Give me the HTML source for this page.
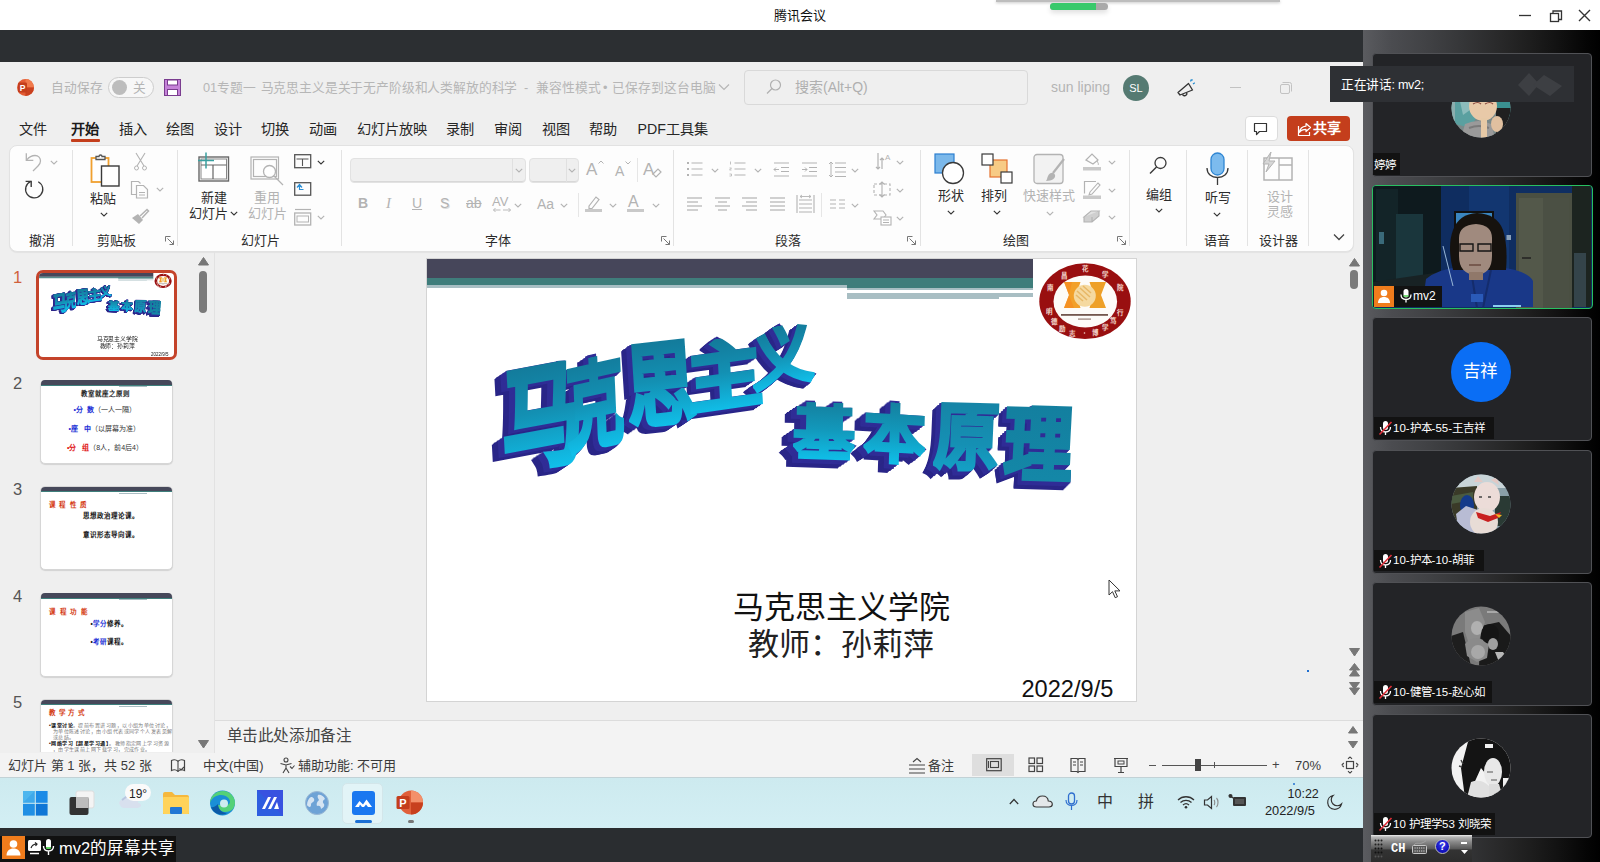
<!DOCTYPE html>
<html lang="zh-CN"><head><meta charset="utf-8">
<style>
*{box-sizing:border-box;margin:0;padding:0}
html,body{width:1600px;height:862px;overflow:hidden}
body{position:relative;font-family:"Liberation Sans",sans-serif;background:#fff;color:#222}
.a{position:absolute}
.t{position:absolute;white-space:nowrap;line-height:1}
svg{position:absolute;overflow:visible}
.wa{position:absolute;left:0;top:0;font-size:100px;line-height:1;font-weight:900;white-space:nowrap;transform-origin:0 0;-webkit-text-stroke:5px currentColor}
.wf{color:transparent;-webkit-background-clip:text;background-clip:text}
</style></head><body>

<!-- ============ TENCENT TITLE BAR ============ -->
<div class="a" style="left:0;top:0;width:1600px;height:30px;background:#fff"></div>
<div class="a" style="left:996px;top:0;width:284px;height:2px;background:#bdbdbd;box-shadow:0 1px 3px rgba(0,0,0,.25)"></div>
<div class="a" style="left:1050px;top:3px;width:58px;height:7px;border-radius:4px;background:#a9a9a9;box-shadow:0 3px 5px rgba(0,0,0,.12)"></div>
<div class="a" style="left:1050px;top:3px;width:46px;height:7px;border-radius:4px 0 0 4px;background:#38c96b"></div>
<div class="t" style="left:774px;top:8.5px;font-size:13px;color:#111">腾讯会议</div>
<svg style="left:1518px;top:8px" width="80" height="16">
<line x1="1" y1="7.5" x2="13" y2="7.5" stroke="#333" stroke-width="1.3"/>
<rect x="32.5" y="5.5" width="8" height="8" fill="none" stroke="#333" stroke-width="1.3"/>
<path d="M35 5.5V3h8.5v8.5H41" fill="none" stroke="#333" stroke-width="1.3"/>
<path d="M61 2l11 11M72 2L61 13" stroke="#333" stroke-width="1.4"/>
</svg>

<!-- ============ DARK BAR ============ -->
<div class="a" style="left:0;top:30px;width:1363px;height:32px;background:#2c2f32"></div>

<!-- ============ POWERPOINT WINDOW ============ -->
<div class="a" style="left:0;top:62px;width:1363px;height:718px;background:#efefef"></div>
<!-- ppt title row -->
<svg style="left:16px;top:78px" width="20" height="20">
<circle cx="9.5" cy="9.5" r="8.5" fill="#e25b33"/>
<path d="M9.5 1A8.5 8.5 0 0 1 18 9.5H9.5z" fill="#f07a4c"/>
<path d="M9.5 18A8.5 8.5 0 0 0 18 9.5H9.5z" fill="#c9411f"/>
<rect x="2" y="4.5" width="9" height="10" rx="1.2" fill="#c43e1c"/>
<text x="6.5" y="12.8" font-family="Liberation Sans" font-weight="bold" font-size="8.5" fill="#fff" text-anchor="middle">P</text>
</svg>
<div class="t" style="left:51px;top:81.5px;font-size:12.7px;color:#b4b4b4">自动保存</div>
<div class="a" style="left:108px;top:77px;width:46px;height:21px;border:1px solid #cdcdcd;border-radius:11px;background:#f7f7f7"></div>
<div class="a" style="left:112px;top:80px;width:15px;height:15px;border-radius:50%;background:#bdbdbd"></div>
<div class="t" style="left:133px;top:81.5px;font-size:12.7px;color:#b4b4b4">关</div>
<svg style="left:164px;top:79px" width="18" height="18">
<rect x="0.5" y="0.5" width="16" height="16" fill="#c583d8" stroke="#7a3d8f" stroke-width="1"/>
<rect x="3.5" y="1" width="10" height="5" fill="#fff" stroke="#7a3d8f" stroke-width="1"/>
<rect x="3.5" y="10.5" width="10" height="6" fill="#fff" stroke="#7a3d8f" stroke-width="1"/>
</svg>
<div class="t" style="left:203px;top:81.5px;font-size:12.75px;color:#b6b6b6">01专题一</div>
<div class="t" style="left:260.5px;top:81.5px;font-size:12.75px;letter-spacing:-0.16px;color:#b6b6b6">马克思主义是关于无产阶级和人类解放的科学</div>
<div class="t" style="left:524px;top:81.5px;font-size:12.75px;color:#b6b6b6">-</div>
<div class="t" style="left:536px;top:81.5px;font-size:12.75px;color:#b6b6b6">兼容性模式</div>
<div class="t" style="left:603px;top:81.5px;font-size:12.75px;color:#b6b6b6">•</div>
<div class="t" style="left:612px;top:81.5px;font-size:12.75px;color:#b6b6b6">已保存到这台电脑</div>
<svg style="left:718px;top:83px" width="12" height="8"><path d="M1 1.5l5 5 5-5" fill="none" stroke="#b6b6b6" stroke-width="1.2"/></svg>
<div class="a" style="left:744px;top:70px;width:284px;height:35px;border:1px solid #d9d9d9;border-radius:4px;background:#efefef"></div>
<svg style="left:766px;top:79px" width="16" height="16"><circle cx="9.5" cy="6" r="5" fill="none" stroke="#b0b0b0" stroke-width="1.2"/><path d="M6 9.5L1 14.5" stroke="#b0b0b0" stroke-width="1.3"/></svg>
<div class="t" style="left:795px;top:79.5px;font-size:14px;color:#b0b0b0">搜索(Alt+Q)</div>
<div class="t" style="left:1051px;top:79.5px;font-size:14px;color:#b4b4b4">sun liping</div>
<div class="a" style="left:1123px;top:75px;width:26px;height:26px;border-radius:50%;background:#557a72"></div>
<div class="t" style="left:1128px;top:82.5px;font-size:11px;color:#fff;width:16px;text-align:center">SL</div>
<svg style="left:1176px;top:78px" width="22" height="20"><path d="M2 14.5L12.5 5.5l4 6.5L4 17z" fill="none" stroke="#333" stroke-width="1.3" stroke-linejoin="round"/><path d="M6.5 16.2a2.2 2.2 0 0 0 4.2-1.4" fill="none" stroke="#333" stroke-width="1.3"/><path d="M14.5 3.5l.8-2M17 6l1.8-1.2M16.3 1.3l-.6 1.4" stroke="#1f8ad0" stroke-width="1.2"/></svg>
<div class="a" style="left:1230px;top:86.5px;width:11px;height:1.2px;background:#c2c2c2"></div>
<svg style="left:1280px;top:82px" width="14" height="14"><rect x="0.5" y="2.5" width="9" height="9" rx="1.5" fill="none" stroke="#c2c2c2"/><path d="M2.5 0.5h7a2 2 0 0 1 2 2v7" fill="none" stroke="#c2c2c2"/></svg>

<!-- menu row -->
<div class="t" style="left:18.5px;top:122px;font-size:14.2px;color:#262626">文件</div>
<div class="t" style="left:71px;top:122px;font-size:14.2px;color:#1a1a1a;font-weight:bold">开始</div>
<div class="a" style="left:71px;top:139px;width:29px;height:2.5px;border-radius:1px;background:#c43e1c"></div>
<div class="t" style="left:118.5px;top:122px;font-size:14.2px;color:#262626">插入</div>
<div class="t" style="left:166px;top:122px;font-size:14.2px;color:#262626">绘图</div>
<div class="t" style="left:214px;top:122px;font-size:14.2px;color:#262626">设计</div>
<div class="t" style="left:261px;top:122px;font-size:14.2px;color:#262626">切换</div>
<div class="t" style="left:308.5px;top:122px;font-size:14.2px;color:#262626">动画</div>
<div class="t" style="left:356.5px;top:122px;font-size:14.2px;color:#262626">幻灯片放映</div>
<div class="t" style="left:446px;top:122px;font-size:14.2px;color:#262626">录制</div>
<div class="t" style="left:494px;top:122px;font-size:14.2px;color:#262626">审阅</div>
<div class="t" style="left:541.5px;top:122px;font-size:14.2px;color:#262626">视图</div>
<div class="t" style="left:589px;top:122px;font-size:14.2px;color:#262626">帮助</div>
<div class="t" style="left:637.5px;top:122px;font-size:14.2px;color:#262626">PDF工具集</div>
<div class="a" style="left:1245px;top:116px;width:32.5px;height:25px;border:1px solid #dcdcdc;border-radius:4px;background:#fff"></div>
<svg style="left:1253px;top:122px" width="16" height="14"><path d="M1.5 1.5h12v8h-7l-3 3v-3h-2z" fill="none" stroke="#333" stroke-width="1.2" stroke-linejoin="round"/></svg>
<div class="a" style="left:1287px;top:116px;width:63px;height:25px;border-radius:4px;background:#c43e1c"></div>
<svg style="left:1297px;top:121px" width="16" height="16"><path d="M9 2.5l4.5 4-4.5 4V8.3c-3 0-5 .8-6.5 3 .4-3.5 2.5-5.8 6.5-6.2z" fill="none" stroke="#fff" stroke-width="1.2" stroke-linejoin="round"/><path d="M1.5 5v9.5h11V11" fill="none" stroke="#fff" stroke-width="1.2"/></svg>
<div class="t" style="left:1313px;top:121px;font-size:14px;color:#fff;font-weight:bold">共享</div>

<!-- ribbon -->
<div class="a" style="left:9px;top:145px;width:1345px;height:107px;background:#fdfdfd;border:1px solid #e2e2e2;border-radius:8px;box-shadow:0 1px 1px rgba(0,0,0,.05)"></div>
<div class="a" style="left:72px;top:150px;width:1px;height:96px;background:#e3e3e3"></div>
<div class="a" style="left:177px;top:150px;width:1px;height:96px;background:#e3e3e3"></div>
<div class="a" style="left:341px;top:150px;width:1px;height:96px;background:#e3e3e3"></div>
<div class="a" style="left:673px;top:150px;width:1px;height:96px;background:#e3e3e3"></div>
<div class="a" style="left:920px;top:150px;width:1px;height:96px;background:#e3e3e3"></div>
<div class="a" style="left:1129px;top:150px;width:1px;height:96px;background:#e3e3e3"></div>
<div class="a" style="left:1186px;top:150px;width:1px;height:96px;background:#e3e3e3"></div>
<div class="a" style="left:1247px;top:150px;width:1px;height:96px;background:#e3e3e3"></div>
<div class="a" style="left:1308px;top:150px;width:1px;height:96px;background:#e3e3e3"></div>
<svg style="left:25px;top:152px" width="20" height="22"><path d="M1.3 1.3v7h7" fill="none" stroke="#b3b3b3" stroke-width="1.3"/><path d="M1.8 7.8C4.5 4.5 7.5 3.5 10 3.5c3.5 0 5.5 2.5 5.5 5.5 0 2-1 3.5-2.5 5L8 19" fill="none" stroke="#b3b3b3" stroke-width="1.3"/></svg>
<svg style="left:50px;top:159.5px" width="8" height="5"><path d="M.8 .8L4 4 7.2 .8" fill="none" stroke="#b3b3b3" stroke-width="1.1"/></svg>
<svg style="left:24px;top:180px" width="22" height="22"><path d="M14.24 1.71A8.6 8.6 0 1 1 6.84 1.38" fill="none" stroke="#3a3a3a" stroke-width="1.3"/><path d="M1.6 1.4h5.6V7" fill="none" stroke="#3a3a3a" stroke-width="1.4"/></svg>
<div class="t" style="left:29px;top:233.5px;font-size:13px;color:#2b2b2b">撤消</div>
<svg style="left:90px;top:153px" width="32" height="34">
<rect x="1.5" y="5" width="17" height="24" fill="#fff" stroke="#f0a030" stroke-width="1.8"/>
<path d="M6 6.5V3.5h3a1.5 1.5 0 0 1 3 0h3v3z" fill="#fff" stroke="#555" stroke-width="1.3"/>
<rect x="11.5" y="13" width="17.5" height="20" fill="#fff" stroke="#3a3a3a" stroke-width="1.4"/>
</svg>
<div class="t" style="left:90px;top:191.5px;font-size:13px;color:#2b2b2b">粘贴</div>
<svg style="left:99.5px;top:211.5px" width="8" height="5"><path d="M.8 .8L4 4 7.2 .8" fill="none" stroke="#333" stroke-width="1.1"/></svg>
<svg style="left:133px;top:152px" width="15" height="19"><path d="M3 1l8 13M12 1L4 14" stroke="#b3b3b3" stroke-width="1.1"/><circle cx="3.5" cy="16" r="2" fill="none" stroke="#b3b3b3"/><circle cx="11.5" cy="16" r="2" fill="none" stroke="#b3b3b3"/></svg>
<svg style="left:130px;top:180px" width="20" height="19"><path d="M6 14.5H1.5v-13h7l2 2" fill="none" stroke="#b3b3b3" stroke-width="1.2"/><path d="M6.5 5.5h7l4 4v8.5h-11z" fill="none" stroke="#b3b3b3" stroke-width="1.2"/><path d="M9 12.5h6M9 15h6" stroke="#b3b3b3"/></svg>
<svg style="left:156px;top:186.5px" width="8" height="5"><path d="M.8 .8L4 4 7.2 .8" fill="none" stroke="#b3b3b3" stroke-width="1.1"/></svg>
<svg style="left:131px;top:208px" width="19" height="17"><path d="M1 10l6-4 5 6-4 4z" fill="#b3b3b3"/><path d="M9 8l7-6.5 1.5 1.5-6.5 7" fill="none" stroke="#b3b3b3" stroke-width="1.5"/></svg>
<div class="t" style="left:97px;top:233.5px;font-size:13px;color:#2b2b2b">剪贴板</div>
<svg style="left:165px;top:236px" width="10" height="10"><path d="M.5 .5h5M.5 .5v5" stroke="#777" stroke-width="1"/><path d="M2.5 2.5l6 6M4.5 8.5h4v-4" fill="none" stroke="#777" stroke-width="1"/></svg>
<svg style="left:197px;top:152px" width="34" height="30">
<rect x="2" y="5" width="29.5" height="24" fill="#fff" stroke="#666" stroke-width="1.4"/>
<rect x="4" y="7" width="25.5" height="20" fill="none" stroke="#888" stroke-width="1"/>
<path d="M4 13h25.5M16 13v14" stroke="#666" stroke-width="1.2"/>
<path d="M9 .5v16M1 8.5h16" stroke="#3aa0a0" stroke-width="1.5"/>
</svg>
<div class="t" style="left:201px;top:190.5px;font-size:13px;color:#2b2b2b">新建</div>
<div class="t" style="left:189px;top:206.5px;font-size:13px;color:#2b2b2b">幻灯片</div>
<svg style="left:230px;top:210.5px" width="8" height="5"><path d="M.8 .8L4 4 7.2 .8" fill="none" stroke="#333" stroke-width="1.1"/></svg>
<svg style="left:250px;top:156px" width="36" height="32">
<rect x="1" y="1" width="27.5" height="22" fill="none" stroke="#b3b3b3" stroke-width="1.2"/>
<rect x="3.5" y="3.5" width="23" height="17" fill="none" stroke="#b3b3b3" stroke-width="1.2"/>
<circle cx="19.5" cy="15.5" r="6" fill="#fff" stroke="#b3b3b3" stroke-width="1.3"/>
<path d="M24 20l9 9" stroke="#b3b3b3" stroke-width="1.3"/>
</svg>
<div class="t" style="left:253.5px;top:190.5px;font-size:13px;color:#b3b3b3">重用</div>
<div class="t" style="left:247.5px;top:206.5px;font-size:13px;color:#b3b3b3">幻灯片</div>
<svg style="left:294px;top:154px" width="18" height="15"><rect x=".7" y=".7" width="16" height="13" fill="none" stroke="#555" stroke-width="1.3"/><path d="M2.5 5h12M8.5 5v7" stroke="#555" stroke-width="1.1"/></svg>
<svg style="left:317px;top:159.5px" width="8" height="5"><path d="M.8 .8L4 4 7.2 .8" fill="none" stroke="#333" stroke-width="1.1"/></svg>
<svg style="left:294px;top:180px" width="18" height="16"><rect x=".7" y="2.7" width="16" height="12.5" fill="none" stroke="#555" stroke-width="1.3"/><path d="M3 7.5l2.5-3 2.5 3M5.5 5v4.5h4" fill="none" stroke="#2b8fd6" stroke-width="1.2"/></svg>
<svg style="left:294px;top:208px" width="18" height="18"><path d="M1 1.5h16" stroke="#b3b3b3" stroke-width="1.2"/><rect x=".7" y="5" width="16" height="12" fill="none" stroke="#b3b3b3" stroke-width="1.3"/><rect x="3" y="8" width="11.5" height="6" fill="none" stroke="#b3b3b3"/></svg>
<svg style="left:317px;top:214.5px" width="8" height="5"><path d="M.8 .8L4 4 7.2 .8" fill="none" stroke="#b3b3b3" stroke-width="1.1"/></svg>
<div class="t" style="left:240.5px;top:233.5px;font-size:13px;color:#2b2b2b">幻灯片</div>
<div class="a" style="left:350px;top:158px;width:176px;height:25px;background:#efefef;border:1px solid #e2e2e2;border-radius:4px;box-shadow:inset 0 -1px 0 #d8d8d8"></div>
<div class="a" style="left:512px;top:159px;width:1px;height:23px;background:#e0e0e0"></div>
<svg style="left:515px;top:167.5px" width="8" height="5"><path d="M.8 .8L4 4 7.2 .8" fill="none" stroke="#b3b3b3" stroke-width="1.1"/></svg>
<div class="a" style="left:528.5px;top:158px;width:50px;height:25px;background:#efefef;border:1px solid #e2e2e2;border-radius:4px;box-shadow:inset 0 -1px 0 #d8d8d8"></div>
<div class="a" style="left:566px;top:159px;width:1px;height:23px;background:#e0e0e0"></div>
<svg style="left:568px;top:167.5px" width="8" height="5"><path d="M.8 .8L4 4 7.2 .8" fill="none" stroke="#b3b3b3" stroke-width="1.1"/></svg>
<div class="t" style="left:586px;top:161px;font-size:17px;color:#b3b3b3">A</div><svg style="left:598px;top:160px" width="6" height="4"><path d="M.5 3.5L3 1l2.5 2.5" fill="none" stroke="#b3b3b3"/></svg>
<div class="t" style="left:615px;top:164px;font-size:14px;color:#b3b3b3">A</div><svg style="left:625px;top:161px" width="6" height="4"><path d="M.5 .5L3 3l2.5-2.5" fill="none" stroke="#b3b3b3"/></svg>
<div class="a" style="left:637px;top:158px;width:1px;height:24px;background:#e6e6e6"></div>
<div class="t" style="left:643px;top:161px;font-size:17px;color:#b3b3b3">A</div><svg style="left:652px;top:168px" width="10" height="10"><path d="M1 6l5-5 3 3-5 5z" fill="#fff" stroke="#b3b3b3" stroke-width="1.2"/></svg>
<div class="t" style="left:358px;top:196px;font-size:14px;color:#b3b3b3;font-weight:bold">B</div>
<div class="t" style="left:386px;top:196px;font-size:15px;color:#b3b3b3;font-family:'Liberation Serif';font-style:italic">I</div>
<div class="t" style="left:412px;top:196px;font-size:14px;color:#b3b3b3;text-decoration:underline">U</div>
<div class="t" style="left:440px;top:196px;font-size:14px;color:#b3b3b3;text-shadow:1px 1px 0 #ddd">S</div>
<div class="t" style="left:466px;top:196px;font-size:14px;color:#b3b3b3;text-decoration:line-through">ab</div>
<div class="t" style="left:492px;top:194.5px;font-size:13px;color:#b3b3b3">AV</div><svg style="left:493px;top:207px" width="18" height="6"><path d="M.5 3h7M.5 3l2-2M.5 3l2 2M10 3h7.5M17.5 3l-2-2M17.5 3l-2 2" fill="none" stroke="#b3b3b3" stroke-width=".9"/></svg>
<svg style="left:514px;top:202.5px" width="8" height="5"><path d="M.8 .8L4 4 7.2 .8" fill="none" stroke="#b3b3b3" stroke-width="1.1"/></svg>
<div class="t" style="left:537px;top:197px;font-size:14px;color:#b3b3b3">Aa</div>
<svg style="left:560px;top:202.5px" width="8" height="5"><path d="M.8 .8L4 4 7.2 .8" fill="none" stroke="#b3b3b3" stroke-width="1.1"/></svg>
<div class="a" style="left:578px;top:193px;width:1px;height:24px;background:#e6e6e6"></div>
<svg style="left:585px;top:195px" width="18" height="18"><path d="M4 11l7-9 3 2.5-7 9H4z" fill="none" stroke="#b3b3b3" stroke-width="1.2"/><rect x="0" y="14" width="17" height="3" fill="#c9c9c9"/></svg>
<svg style="left:609px;top:202.5px" width="8" height="5"><path d="M.8 .8L4 4 7.2 .8" fill="none" stroke="#b3b3b3" stroke-width="1.1"/></svg>
<div class="t" style="left:628px;top:194px;font-size:16px;color:#b3b3b3">A</div><div class="a" style="left:627px;top:209px;width:17px;height:3px;background:#c9c9c9"></div>
<svg style="left:652px;top:202.5px" width="8" height="5"><path d="M.8 .8L4 4 7.2 .8" fill="none" stroke="#b3b3b3" stroke-width="1.1"/></svg>
<div class="t" style="left:485px;top:233.5px;font-size:13px;color:#2b2b2b">字体</div>
<svg style="left:661px;top:236px" width="10" height="10"><path d="M.5 .5h5M.5 .5v5" stroke="#777" stroke-width="1"/><path d="M2.5 2.5l6 6M4.5 8.5h4v-4" fill="none" stroke="#777" stroke-width="1"/></svg>
<svg style="left:686px;top:161px" width="18" height="16"><path d="M1 2h2M1 8h2M1 14h2" stroke="#b3b3b3" stroke-width="2"/><path d="M5.5 2h11M5.5 8h11M5.5 14h11" stroke="#b3b3b3" stroke-width="1.2"/></svg>
<svg style="left:711px;top:167.5px" width="8" height="5"><path d="M.8 .8L4 4 7.2 .8" fill="none" stroke="#b3b3b3" stroke-width="1.1"/></svg>
<svg style="left:729px;top:161px" width="18" height="16"><path d="M1.5 .5v3M.5 7h2l-2 2h2M.5 13h2v2h-2" fill="none" stroke="#b3b3b3" stroke-width=".8"/><path d="M5.5 2h11M5.5 8h11M5.5 14h11" stroke="#b3b3b3" stroke-width="1.2"/></svg>
<svg style="left:754px;top:167.5px" width="8" height="5"><path d="M.8 .8L4 4 7.2 .8" fill="none" stroke="#b3b3b3" stroke-width="1.1"/></svg>
<svg style="left:773px;top:162px" width="17" height="15"><path d="M1 1h15M8 5.5h8M8 9.5h8M1 14h15" stroke="#b3b3b3" stroke-width="1.2"/><path d="M6 7.5H1M3 5.5l-2 2 2 2" fill="none" stroke="#b3b3b3"/></svg>
<svg style="left:801px;top:162px" width="17" height="15"><path d="M1 1h15M8 5.5h8M8 9.5h8M1 14h15" stroke="#b3b3b3" stroke-width="1.2"/><path d="M1 7.5h5M4 5.5l2 2-2 2" fill="none" stroke="#b3b3b3"/></svg>
<svg style="left:828px;top:161px" width="19" height="17"><path d="M7 2h11M7 6.5h11M7 11h11M7 15.5h11" stroke="#b3b3b3" stroke-width="1.2"/><path d="M3 1v15M1 3l2-2 2 2M1 14l2 2 2-2" fill="none" stroke="#b3b3b3"/></svg>
<svg style="left:851px;top:167.5px" width="8" height="5"><path d="M.8 .8L4 4 7.2 .8" fill="none" stroke="#b3b3b3" stroke-width="1.1"/></svg>
<svg style="left:687px;top:197px" width="17" height="15"><path d="M0 1h15" stroke="#b3b3b3" stroke-width="1.2"/><path d="M0 5h11" stroke="#b3b3b3" stroke-width="1.2"/><path d="M0 9h15" stroke="#b3b3b3" stroke-width="1.2"/><path d="M0 13h11" stroke="#b3b3b3" stroke-width="1.2"/></svg>
<svg style="left:715px;top:197px" width="17" height="15"><path d="M0 1h15" stroke="#b3b3b3" stroke-width="1.2"/><path d="M3 5h9" stroke="#b3b3b3" stroke-width="1.2"/><path d="M0 9h15" stroke="#b3b3b3" stroke-width="1.2"/><path d="M3 13h9" stroke="#b3b3b3" stroke-width="1.2"/></svg>
<svg style="left:742px;top:197px" width="17" height="15"><path d="M0 1h15" stroke="#b3b3b3" stroke-width="1.2"/><path d="M4 5h11" stroke="#b3b3b3" stroke-width="1.2"/><path d="M0 9h15" stroke="#b3b3b3" stroke-width="1.2"/><path d="M4 13h11" stroke="#b3b3b3" stroke-width="1.2"/></svg>
<svg style="left:770px;top:197px" width="17" height="15"><path d="M0 1h15" stroke="#b3b3b3" stroke-width="1.2"/><path d="M0 5h15" stroke="#b3b3b3" stroke-width="1.2"/><path d="M0 9h15" stroke="#b3b3b3" stroke-width="1.2"/><path d="M0 13h15" stroke="#b3b3b3" stroke-width="1.2"/></svg>
<svg style="left:796px;top:194px" width="19" height="20"><path d="M1 1v18M18 1v18M3 6h13M3 10h13M3 14h13M3 18h13" stroke="#b3b3b3" stroke-width="1.1"/><path d="M4 2.5h11M4 2.5l2-1.5M4 2.5l2 1.5M15 2.5l-2-1.5M15 2.5l-2 1.5" fill="none" stroke="#b3b3b3" stroke-width=".9"/></svg>
<div class="a" style="left:821px;top:193px;width:1px;height:24px;background:#e6e6e6"></div>
<svg style="left:830px;top:199px" width="16" height="11"><path d="M0 1h6M0 5h6M0 9h6M9 1h6M9 5h6M9 9h6" stroke="#b3b3b3" stroke-width="1.2"/></svg>
<svg style="left:851px;top:202.5px" width="8" height="5"><path d="M.8 .8L4 4 7.2 .8" fill="none" stroke="#b3b3b3" stroke-width="1.1"/></svg>
<svg style="left:875px;top:152px" width="17" height="20"><path d="M3 1v16M1 15l2 2 2-2" fill="none" stroke="#b3b3b3" stroke-width="1.2"/><path d="M7 17V6M5 8l2-2 2 2" fill="none" stroke="#b3b3b3" stroke-width="1.2"/><text x="10" y="8" font-size="8" fill="#b3b3b3" font-family="Liberation Sans">A</text></svg>
<svg style="left:896px;top:159.5px" width="8" height="5"><path d="M.8 .8L4 4 7.2 .8" fill="none" stroke="#b3b3b3" stroke-width="1.1"/></svg>
<svg style="left:873px;top:181px" width="18" height="17"><rect x="1" y="3" width="16" height="11" fill="none" stroke="#b3b3b3" stroke-width="1.1" stroke-dasharray="3 2"/><path d="M9 .5v16M6.5 3.5L9 1l2.5 2.5M6.5 13.5L9 16l2.5-2.5" fill="none" stroke="#b3b3b3" stroke-width="1.1"/></svg>
<svg style="left:896px;top:187.5px" width="8" height="5"><path d="M.8 .8L4 4 7.2 .8" fill="none" stroke="#b3b3b3" stroke-width="1.1"/></svg>
<svg style="left:873px;top:209px" width="20" height="17"><path d="M1 2h9l3 4-3 4H1l3-4z" fill="none" stroke="#b3b3b3" stroke-width="1.1"/><rect x="8" y="8" width="10" height="8" fill="#fff" stroke="#b3b3b3" stroke-width="1.1"/><path d="M10 11h6M10 13.5h6" stroke="#b3b3b3"/></svg>
<svg style="left:896px;top:215.5px" width="8" height="5"><path d="M.8 .8L4 4 7.2 .8" fill="none" stroke="#b3b3b3" stroke-width="1.1"/></svg>
<div class="t" style="left:774.5px;top:233.5px;font-size:13px;color:#2b2b2b">段落</div>
<svg style="left:907px;top:236px" width="10" height="10"><path d="M.5 .5h5M.5 .5v5" stroke="#777" stroke-width="1"/><path d="M2.5 2.5l6 6M4.5 8.5h4v-4" fill="none" stroke="#777" stroke-width="1"/></svg>
<svg style="left:934px;top:153px" width="34" height="32"><rect x="1" y="1" width="19" height="19" fill="#7bb8ea" stroke="#2c7fd0" stroke-width="1.2"/><circle cx="19" cy="20" r="10.5" fill="#fff" stroke="#3a3a3a" stroke-width="1.3"/></svg>
<div class="t" style="left:937.5px;top:188.5px;font-size:13px;color:#2b2b2b">形状</div>
<svg style="left:947px;top:209.5px" width="8" height="5"><path d="M.8 .8L4 4 7.2 .8" fill="none" stroke="#333" stroke-width="1.1"/></svg>
<svg style="left:981px;top:153px" width="33" height="32"><rect x="9" y="7" width="17" height="17" fill="#f7cb85" stroke="#e4722f" stroke-width="1.2"/><rect x="1" y="1" width="11" height="11" fill="#fff" stroke="#3a3a3a" stroke-width="1.2"/><rect x="20" y="19" width="11" height="11" fill="#fff" stroke="#3a3a3a" stroke-width="1.2"/></svg>
<div class="t" style="left:981px;top:188.5px;font-size:13px;color:#2b2b2b">排列</div>
<svg style="left:993px;top:209.5px" width="8" height="5"><path d="M.8 .8L4 4 7.2 .8" fill="none" stroke="#333" stroke-width="1.1"/></svg>
<svg style="left:1033px;top:153px" width="34" height="33"><rect x="1" y="1.5" width="29" height="29" rx="3" fill="#f2f2f2" stroke="#b3b3b3" stroke-width="1.3"/><path d="M31 6L20 20" stroke="#b3b3b3" stroke-width="2.2"/><path d="M15 23c2-4 6-4 7-1 1 3-3 6-9 6 1-1 1-3 2-5z" fill="#b3b3b3"/></svg>
<div class="t" style="left:1023px;top:188.5px;font-size:13px;color:#b3b3b3">快速样式</div>
<svg style="left:1046px;top:210.5px" width="8" height="5"><path d="M.8 .8L4 4 7.2 .8" fill="none" stroke="#b3b3b3" stroke-width="1.1"/></svg>
<svg style="left:1083px;top:152px" width="19" height="19"><path d="M3 8l6-6 6 6-5 4z" fill="none" stroke="#b3b3b3" stroke-width="1.2"/><path d="M14 9c1 2 2 3 1 4" fill="none" stroke="#b3b3b3"/><rect x="0" y="15" width="18" height="3.5" fill="#c9c9c9"/></svg>
<svg style="left:1108px;top:159.5px" width="8" height="5"><path d="M.8 .8L4 4 7.2 .8" fill="none" stroke="#b3b3b3" stroke-width="1.1"/></svg>
<svg style="left:1083px;top:180px" width="19" height="19"><path d="M13 1.5H1.5v12" fill="none" stroke="#b3b3b3" stroke-width="1.2"/><path d="M7 12l8-9 2 2-8 9-3 1z" fill="none" stroke="#b3b3b3" stroke-width="1.1"/><rect x="0" y="15.5" width="18" height="3.5" fill="#c9c9c9"/></svg>
<svg style="left:1108px;top:187.5px" width="8" height="5"><path d="M.8 .8L4 4 7.2 .8" fill="none" stroke="#b3b3b3" stroke-width="1.1"/></svg>
<svg style="left:1083px;top:208px" width="18" height="16"><path d="M1 9l7-6h8l-7 6z" fill="#e2e2e2" stroke="#b3b3b3" stroke-width="1.1"/><path d="M1 9v5h8l7-6V3M9 9v5" fill="#cfcfcf" stroke="#b3b3b3" stroke-width="1.1"/></svg>
<svg style="left:1108px;top:214.5px" width="8" height="5"><path d="M.8 .8L4 4 7.2 .8" fill="none" stroke="#b3b3b3" stroke-width="1.1"/></svg>
<div class="t" style="left:1002.5px;top:233.5px;font-size:13px;color:#2b2b2b">绘图</div>
<svg style="left:1117px;top:236px" width="10" height="10"><path d="M.5 .5h5M.5 .5v5" stroke="#777" stroke-width="1"/><path d="M2.5 2.5l6 6M4.5 8.5h4v-4" fill="none" stroke="#777" stroke-width="1"/></svg>
<svg style="left:1149px;top:156px" width="19" height="19"><circle cx="11.5" cy="7" r="5.5" fill="none" stroke="#3a3a3a" stroke-width="1.3"/><path d="M7.5 11L1 17.5" stroke="#3a3a3a" stroke-width="1.4"/></svg>
<div class="t" style="left:1146px;top:187.5px;font-size:13px;color:#2b2b2b">编组</div>
<svg style="left:1155px;top:207.5px" width="8" height="5"><path d="M.8 .8L4 4 7.2 .8" fill="none" stroke="#333" stroke-width="1.1"/></svg>
<svg style="left:1206px;top:152px" width="24" height="34"><rect x="5" y="1" width="13" height="22" rx="6.5" fill="#7cbbee" stroke="#2f86d3" stroke-width="1.3"/><path d="M1 16c0 6 4.5 9.5 10.5 9.5S22 22 22 16M11.5 25.5V33" fill="none" stroke="#3a3a3a" stroke-width="1.3"/></svg>
<div class="t" style="left:1205px;top:190.5px;font-size:13px;color:#2b2b2b">听写</div>
<svg style="left:1213px;top:211.5px" width="8" height="5"><path d="M.8 .8L4 4 7.2 .8" fill="none" stroke="#333" stroke-width="1.1"/></svg>
<div class="t" style="left:1203.5px;top:233.5px;font-size:13px;color:#2b2b2b">语音</div>
<svg style="left:1261px;top:151px" width="34" height="32"><rect x="3" y="7" width="28" height="22" fill="none" stroke="#b3b3b3" stroke-width="1.5"/><path d="M18 7v22M18 14h13" stroke="#b3b3b3" stroke-width="1.3"/><path d="M10 1L2 13h6l-3 8 9-11H8z" fill="#d6d6d6" stroke="#b3b3b3" stroke-width="1"/></svg>
<div class="t" style="left:1267px;top:189.5px;font-size:13px;color:#b3b3b3">设计</div>
<div class="t" style="left:1267px;top:204.5px;font-size:13px;color:#b3b3b3">灵感</div>
<div class="t" style="left:1258.5px;top:233.5px;font-size:13px;color:#2b2b2b">设计器</div>
<svg style="left:1333px;top:233px" width="12" height="8"><path d="M1 1.5l5 5 5-5" fill="none" stroke="#444" stroke-width="1.3"/></svg>
<!-- slide pane -->
<div class="a" style="left:214px;top:252px;width:1px;height:501px;background:#e2e2e2"></div>
<svg style="left:198px;top:257px" width="11" height="9"><path d="M5.5 .5L10.5 8H.5z" fill="#777" stroke="#777" stroke-linejoin="round"/></svg>
<div class="a" style="left:199px;top:270.5px;width:8px;height:42px;border-radius:4px;background:#7a7a7a"></div>
<svg style="left:198px;top:740px" width="11" height="9"><path d="M.5 .5h10L5.5 8z" fill="#777" stroke="#777" stroke-linejoin="round"/></svg>
<div class="t" style="left:13px;top:268.5px;font-size:16.5px;color:#d0603c">1</div>
<div class="t" style="left:13px;top:375px;font-size:16.5px;color:#555">2</div>
<div class="t" style="left:13px;top:481px;font-size:16.5px;color:#555">3</div>
<div class="t" style="left:13px;top:588px;font-size:16.5px;color:#555">4</div>
<div class="t" style="left:13px;top:694px;font-size:16.5px;color:#555">5</div>
<div class="a" style="left:36px;top:269.5px;width:140.5px;height:90.5px;border:3px solid #c4432a;border-radius:7px;background:#fff;overflow:hidden"><div class="a" style="left:0;top:0;width:710.5px;height:443.5px;transform:scale(0.1886);transform-origin:0 0"><div id="thumb1in"><div class="a" style="left:0;top:0;width:606px;height:19.5px;background:#46465a"></div>
<div class="a" style="left:0;top:19.5px;width:606px;height:6.5px;background:#3f7d7b"></div>
<div class="a" style="left:420px;top:26px;width:186px;height:3.5px;background:#3f7d7b"></div>
<div class="a" style="left:0;top:26px;width:420px;height:3px;background:#a8bec3"></div>
<div class="a" style="left:420px;top:29.5px;width:186px;height:2px;background:#a8bec3"></div>
<div class="a" style="left:420px;top:34.5px;width:186px;height:3.5px;background:#a8bec3"></div>
<div class="a" style="left:420px;top:38px;width:152px;height:2px;background:#a8bec3"></div>
<svg style="left:610px;top:2px" width="96" height="82">
<ellipse cx="48" cy="40.2" rx="45.7" ry="37.9" fill="#990f10"/>
<ellipse cx="48.3" cy="40.5" rx="31.8" ry="26.1" fill="#fdfbf8"/>
<path d="M27 21h16.5l-4 12 4 14H27l5-13z" fill="#f2a02a"/>
<path d="M52.5 21H69l-5 13 5 13H52.5l4-14z" fill="#eea028"/>
<path d="M27 21h8l-3 13 5 13h-10l5-13z" fill="#f68a20" opacity=".7"/>
<circle cx="47.8" cy="34.7" r="11" fill="#f5d9a0"/>
<path d="M40 30l10 9M43 27l10 9M46 25l8 7M39 34l7 6" stroke="#e7b868" stroke-width="1.6"/>
<rect x="24" y="53" width="47" height="1.8" fill="#5a3a30" opacity=".85"/>
<rect x="41" y="57.5" width="13" height="1.2" fill="#6a4a40" opacity=".7"/>
<g fill="#f2d6cc" font-size="6.5" font-family="Liberation Serif" font-weight="bold" text-anchor="middle"><text x="13.3" y="28.6">南</text><text x="27.4" y="16.6">昌</text><text x="48.3" y="10.3">花</text><text x="68.7" y="15.600000000000001">学</text><text x="83.3" y="29.1">院</text><text x="12.3" y="53.199999999999996">明</text><text x="17.5" y="62.599999999999994">德</text><text x="25.3" y="69.8">励</text><text x="35.8" y="74.6">志</text><text x="58.8" y="74.0">博</text><text x="68.7" y="68.8">学</text><text x="76.5" y="61.5">笃</text><text x="83.8" y="53.699999999999996">行</text><circle cx="47.5" cy="72" r=".8"/></g>
</svg>
<div class="wa" style="color:#2a2688;transform:matrix(0.8111,-0.1511,0.0617,1.1160,59.36,117.94)">马</div>
<div class="wa" style="color:#2a2688;transform:matrix(0.8111,-0.1511,0.0617,1.1160,60.36,117.27)">马</div>
<div class="wa" style="color:#2a2688;transform:matrix(0.8111,-0.1511,0.0617,1.1160,61.36,116.60)">马</div>
<div class="wa" style="color:#2a2688;transform:matrix(0.8111,-0.1511,0.0617,1.1160,62.36,115.94)">马</div>
<div class="wa" style="color:#2a2688;transform:matrix(0.8111,-0.1511,0.0617,1.1160,63.36,115.27)">马</div>
<div class="wa" style="color:#2a2688;transform:matrix(0.8111,-0.1511,0.0617,1.1160,64.36,114.60)">马</div>
<div class="wa" style="color:#302d96;transform:matrix(0.8111,-0.1511,0.0617,1.1160,65.36,113.94)">马</div>
<div class="wa" style="color:#302d96;transform:matrix(0.8111,-0.1511,0.0617,1.1160,66.36,113.27)">马</div>
<div class="wa" style="color:#302d96;transform:matrix(0.8111,-0.1511,0.0617,1.1160,67.36,112.60)">马</div>
<div class="wa" style="color:#302d96;transform:matrix(0.8111,-0.1511,0.0617,1.1160,68.36,111.94)">马</div>
<div class="wa" style="color:#302d96;transform:matrix(0.8111,-0.1511,0.0617,1.1160,69.36,111.27)">马</div>
<div class="wa" style="color:#302d96;transform:matrix(0.8111,-0.1511,0.0617,1.1160,70.36,110.60)">马</div>
<div class="wa" style="color:#2a2688;transform:matrix(0.5670,-0.1282,0.0412,0.9647,126.68,112.23)">克</div>
<div class="wa" style="color:#2a2688;transform:matrix(0.5670,-0.1282,0.0412,0.9647,127.60,111.56)">克</div>
<div class="wa" style="color:#2a2688;transform:matrix(0.5670,-0.1282,0.0412,0.9647,128.51,110.89)">克</div>
<div class="wa" style="color:#2a2688;transform:matrix(0.5670,-0.1282,0.0412,0.9647,129.43,110.23)">克</div>
<div class="wa" style="color:#2a2688;transform:matrix(0.5670,-0.1282,0.0412,0.9647,130.35,109.56)">克</div>
<div class="wa" style="color:#2a2688;transform:matrix(0.5670,-0.1282,0.0412,0.9647,131.26,108.89)">克</div>
<div class="wa" style="color:#302d96;transform:matrix(0.5670,-0.1282,0.0412,0.9647,132.18,108.23)">克</div>
<div class="wa" style="color:#302d96;transform:matrix(0.5670,-0.1282,0.0412,0.9647,133.10,107.56)">克</div>
<div class="wa" style="color:#302d96;transform:matrix(0.5670,-0.1282,0.0412,0.9647,134.01,106.89)">克</div>
<div class="wa" style="color:#302d96;transform:matrix(0.5670,-0.1282,0.0412,0.9647,134.93,106.23)">克</div>
<div class="wa" style="color:#302d96;transform:matrix(0.5670,-0.1282,0.0412,0.9647,135.85,105.56)">克</div>
<div class="wa" style="color:#302d96;transform:matrix(0.5670,-0.1282,0.0412,0.9647,136.76,104.89)">克</div>
<div class="wa" style="color:#2a2688;transform:matrix(0.6802,-0.0755,0.0596,0.9091,186.75,91.72)">思</div>
<div class="wa" style="color:#2a2688;transform:matrix(0.6802,-0.0755,0.0596,0.9091,187.58,91.14)">思</div>
<div class="wa" style="color:#2a2688;transform:matrix(0.6802,-0.0755,0.0596,0.9091,188.42,90.55)">思</div>
<div class="wa" style="color:#2a2688;transform:matrix(0.6802,-0.0755,0.0596,0.9091,189.25,89.97)">思</div>
<div class="wa" style="color:#2a2688;transform:matrix(0.6802,-0.0755,0.0596,0.9091,190.08,89.39)">思</div>
<div class="wa" style="color:#2a2688;transform:matrix(0.6802,-0.0755,0.0596,0.9091,190.92,88.80)">思</div>
<div class="wa" style="color:#302d96;transform:matrix(0.6802,-0.0755,0.0596,0.9091,191.75,88.22)">思</div>
<div class="wa" style="color:#302d96;transform:matrix(0.6802,-0.0755,0.0596,0.9091,192.58,87.64)">思</div>
<div class="wa" style="color:#302d96;transform:matrix(0.6802,-0.0755,0.0596,0.9091,193.42,87.05)">思</div>
<div class="wa" style="color:#302d96;transform:matrix(0.6802,-0.0755,0.0596,0.9091,194.25,86.47)">思</div>
<div class="wa" style="color:#302d96;transform:matrix(0.6802,-0.0755,0.0596,0.9091,195.08,85.89)">思</div>
<div class="wa" style="color:#302d96;transform:matrix(0.6802,-0.0755,0.0596,0.9091,195.92,85.30)">思</div>
<div class="wa" style="color:#2a2688;transform:matrix(0.7451,-0.1059,0.0408,0.7561,249.05,90.54)">主</div>
<div class="wa" style="color:#2a2688;transform:matrix(0.7451,-0.1059,0.0408,0.7561,249.80,90.04)">主</div>
<div class="wa" style="color:#2a2688;transform:matrix(0.7451,-0.1059,0.0408,0.7561,250.55,89.54)">主</div>
<div class="wa" style="color:#2a2688;transform:matrix(0.7451,-0.1059,0.0408,0.7561,251.30,89.04)">主</div>
<div class="wa" style="color:#2a2688;transform:matrix(0.7451,-0.1059,0.0408,0.7561,252.05,88.54)">主</div>
<div class="wa" style="color:#2a2688;transform:matrix(0.7451,-0.1059,0.0408,0.7561,252.80,88.04)">主</div>
<div class="wa" style="color:#302d96;transform:matrix(0.7451,-0.1059,0.0408,0.7561,253.55,87.54)">主</div>
<div class="wa" style="color:#302d96;transform:matrix(0.7451,-0.1059,0.0408,0.7561,254.30,87.04)">主</div>
<div class="wa" style="color:#302d96;transform:matrix(0.7451,-0.1059,0.0408,0.7561,255.05,86.54)">主</div>
<div class="wa" style="color:#302d96;transform:matrix(0.7451,-0.1059,0.0408,0.7561,255.80,86.04)">主</div>
<div class="wa" style="color:#302d96;transform:matrix(0.7451,-0.1059,0.0408,0.7561,256.55,85.54)">主</div>
<div class="wa" style="color:#302d96;transform:matrix(0.7451,-0.1059,0.0408,0.7561,257.30,85.04)">主</div>
<div class="wa" style="color:#2a2688;transform:matrix(0.6186,-0.1255,0.0374,0.6411,314.68,78.83)">义</div>
<div class="wa" style="color:#2a2688;transform:matrix(0.6186,-0.1255,0.0374,0.6411,315.34,78.33)">义</div>
<div class="wa" style="color:#2a2688;transform:matrix(0.6186,-0.1255,0.0374,0.6411,316.01,77.83)">义</div>
<div class="wa" style="color:#2a2688;transform:matrix(0.6186,-0.1255,0.0374,0.6411,316.68,77.33)">义</div>
<div class="wa" style="color:#2a2688;transform:matrix(0.6186,-0.1255,0.0374,0.6411,317.34,76.83)">义</div>
<div class="wa" style="color:#2a2688;transform:matrix(0.6186,-0.1255,0.0374,0.6411,318.01,76.33)">义</div>
<div class="wa" style="color:#302d96;transform:matrix(0.6186,-0.1255,0.0374,0.6411,318.68,75.83)">义</div>
<div class="wa" style="color:#302d96;transform:matrix(0.6186,-0.1255,0.0374,0.6411,319.34,75.33)">义</div>
<div class="wa" style="color:#302d96;transform:matrix(0.6186,-0.1255,0.0374,0.6411,320.01,74.83)">义</div>
<div class="wa" style="color:#302d96;transform:matrix(0.6186,-0.1255,0.0374,0.6411,320.68,74.33)">义</div>
<div class="wa" style="color:#302d96;transform:matrix(0.6186,-0.1255,0.0374,0.6411,321.34,73.83)">义</div>
<div class="wa" style="color:#302d96;transform:matrix(0.6186,-0.1255,0.0374,0.6411,322.01,73.33)">义</div>
<div class="wa wf" style="background-image:linear-gradient(#137a9a 0%,#1390b3 45%,#10c3ee 100%);transform:matrix(0.8111,-0.1511,0.0617,1.1160,71.36,109.94)">马</div>
<div class="wa wf" style="background-image:linear-gradient(#137a9a 0%,#1390b3 45%,#10c3ee 100%);transform:matrix(0.5670,-0.1282,0.0412,0.9647,137.68,104.23)">克</div>
<div class="wa wf" style="background-image:linear-gradient(#137a9a 0%,#1390b3 45%,#10c3ee 100%);transform:matrix(0.6802,-0.0755,0.0596,0.9091,196.75,84.72)">思</div>
<div class="wa wf" style="background-image:linear-gradient(#137a9a 0%,#1390b3 45%,#10c3ee 100%);transform:matrix(0.7451,-0.1059,0.0408,0.7561,258.05,84.54)">主</div>
<div class="wa wf" style="background-image:linear-gradient(#137a9a 0%,#1390b3 45%,#10c3ee 100%);transform:matrix(0.6186,-0.1255,0.0374,0.6411,322.68,72.83)">义</div>
<div class="wa" style="color:#2a2688;transform:matrix(0.6186,0.0196,-0.0092,0.6010,354.43,150.45)">基</div>
<div class="wa" style="color:#2a2688;transform:matrix(0.6186,0.0196,-0.0092,0.6010,355.43,149.78)">基</div>
<div class="wa" style="color:#2a2688;transform:matrix(0.6186,0.0196,-0.0092,0.6010,356.43,149.12)">基</div>
<div class="wa" style="color:#2a2688;transform:matrix(0.6186,0.0196,-0.0092,0.6010,357.43,148.45)">基</div>
<div class="wa" style="color:#2a2688;transform:matrix(0.6186,0.0196,-0.0092,0.6010,358.43,147.78)">基</div>
<div class="wa" style="color:#2a2688;transform:matrix(0.6186,0.0196,-0.0092,0.6010,359.43,147.12)">基</div>
<div class="wa" style="color:#302d96;transform:matrix(0.6186,0.0196,-0.0092,0.6010,360.43,146.45)">基</div>
<div class="wa" style="color:#302d96;transform:matrix(0.6186,0.0196,-0.0092,0.6010,361.43,145.78)">基</div>
<div class="wa" style="color:#302d96;transform:matrix(0.6186,0.0196,-0.0092,0.6010,362.43,145.12)">基</div>
<div class="wa" style="color:#302d96;transform:matrix(0.6186,0.0196,-0.0092,0.6010,363.43,144.45)">基</div>
<div class="wa" style="color:#302d96;transform:matrix(0.6186,0.0196,-0.0092,0.6010,364.43,143.78)">基</div>
<div class="wa" style="color:#302d96;transform:matrix(0.6186,0.0196,-0.0092,0.6010,365.43,143.12)">基</div>
<div class="wa" style="color:#2a2688;transform:matrix(0.6200,0.0381,-0.0186,0.6373,426.66,149.63)">本</div>
<div class="wa" style="color:#2a2688;transform:matrix(0.6200,0.0381,-0.0186,0.6373,427.58,148.96)">本</div>
<div class="wa" style="color:#2a2688;transform:matrix(0.6200,0.0381,-0.0186,0.6373,428.50,148.29)">本</div>
<div class="wa" style="color:#2a2688;transform:matrix(0.6200,0.0381,-0.0186,0.6373,429.41,147.63)">本</div>
<div class="wa" style="color:#2a2688;transform:matrix(0.6200,0.0381,-0.0186,0.6373,430.33,146.96)">本</div>
<div class="wa" style="color:#2a2688;transform:matrix(0.6200,0.0381,-0.0186,0.6373,431.25,146.29)">本</div>
<div class="wa" style="color:#302d96;transform:matrix(0.6200,0.0381,-0.0186,0.6373,432.16,145.63)">本</div>
<div class="wa" style="color:#302d96;transform:matrix(0.6200,0.0381,-0.0186,0.6373,433.08,144.96)">本</div>
<div class="wa" style="color:#302d96;transform:matrix(0.6200,0.0381,-0.0186,0.6373,434.00,144.29)">本</div>
<div class="wa" style="color:#302d96;transform:matrix(0.6200,0.0381,-0.0186,0.6373,434.91,143.63)">本</div>
<div class="wa" style="color:#302d96;transform:matrix(0.6200,0.0381,-0.0186,0.6373,435.83,142.96)">本</div>
<div class="wa" style="color:#302d96;transform:matrix(0.6200,0.0381,-0.0186,0.6373,436.75,142.29)">本</div>
<div class="wa" style="color:#2a2688;transform:matrix(0.6490,0.0196,-0.0299,0.7309,499.53,148.99)">原</div>
<div class="wa" style="color:#2a2688;transform:matrix(0.6490,0.0196,-0.0299,0.7309,500.28,148.32)">原</div>
<div class="wa" style="color:#2a2688;transform:matrix(0.6490,0.0196,-0.0299,0.7309,501.03,147.66)">原</div>
<div class="wa" style="color:#2a2688;transform:matrix(0.6490,0.0196,-0.0299,0.7309,501.78,146.99)">原</div>
<div class="wa" style="color:#2a2688;transform:matrix(0.6490,0.0196,-0.0299,0.7309,502.53,146.32)">原</div>
<div class="wa" style="color:#2a2688;transform:matrix(0.6490,0.0196,-0.0299,0.7309,503.28,145.66)">原</div>
<div class="wa" style="color:#302d96;transform:matrix(0.6490,0.0196,-0.0299,0.7309,504.03,144.99)">原</div>
<div class="wa" style="color:#302d96;transform:matrix(0.6490,0.0196,-0.0299,0.7309,504.78,144.32)">原</div>
<div class="wa" style="color:#302d96;transform:matrix(0.6490,0.0196,-0.0299,0.7309,505.53,143.66)">原</div>
<div class="wa" style="color:#302d96;transform:matrix(0.6490,0.0196,-0.0299,0.7309,506.28,142.99)">原</div>
<div class="wa" style="color:#302d96;transform:matrix(0.6490,0.0196,-0.0299,0.7309,507.03,142.32)">原</div>
<div class="wa" style="color:#302d96;transform:matrix(0.6490,0.0196,-0.0299,0.7309,507.78,141.66)">原</div>
<div class="wa" style="color:#2a2688;transform:matrix(0.6827,0.0202,-0.0442,0.8211,571.34,152.26)">理</div>
<div class="wa" style="color:#2a2688;transform:matrix(0.6827,0.0202,-0.0442,0.8211,572.01,151.59)">理</div>
<div class="wa" style="color:#2a2688;transform:matrix(0.6827,0.0202,-0.0442,0.8211,572.67,150.93)">理</div>
<div class="wa" style="color:#2a2688;transform:matrix(0.6827,0.0202,-0.0442,0.8211,573.34,150.26)">理</div>
<div class="wa" style="color:#2a2688;transform:matrix(0.6827,0.0202,-0.0442,0.8211,574.01,149.59)">理</div>
<div class="wa" style="color:#2a2688;transform:matrix(0.6827,0.0202,-0.0442,0.8211,574.67,148.93)">理</div>
<div class="wa" style="color:#302d96;transform:matrix(0.6827,0.0202,-0.0442,0.8211,575.34,148.26)">理</div>
<div class="wa" style="color:#302d96;transform:matrix(0.6827,0.0202,-0.0442,0.8211,576.01,147.59)">理</div>
<div class="wa" style="color:#302d96;transform:matrix(0.6827,0.0202,-0.0442,0.8211,576.67,146.93)">理</div>
<div class="wa" style="color:#302d96;transform:matrix(0.6827,0.0202,-0.0442,0.8211,577.34,146.26)">理</div>
<div class="wa" style="color:#302d96;transform:matrix(0.6827,0.0202,-0.0442,0.8211,578.01,145.59)">理</div>
<div class="wa" style="color:#302d96;transform:matrix(0.6827,0.0202,-0.0442,0.8211,578.67,144.93)">理</div>
<div class="wa wf" style="background-image:linear-gradient(#14809f 0%,#1298bb 45%,#0fc2ec 100%);transform:matrix(0.6186,0.0196,-0.0092,0.6010,366.43,142.45)">基</div>
<div class="wa wf" style="background-image:linear-gradient(#14809f 0%,#1298bb 45%,#0fc2ec 100%);transform:matrix(0.6200,0.0381,-0.0186,0.6373,437.66,141.63)">本</div>
<div class="wa wf" style="background-image:linear-gradient(#1684a6 0%,#1590b4 60%,#14a2c8 100%);transform:matrix(0.6490,0.0196,-0.0299,0.7309,508.53,140.99)">原</div>
<div class="wa wf" style="background-image:linear-gradient(#137f9f,#1488a8);transform:matrix(0.6827,0.0202,-0.0442,0.8211,579.34,144.26)">理</div>
<div class="t" style="left:306px;top:333px;font-size:31px;color:#111">马克思主义学院</div>
<div class="t" style="left:321px;top:370px;font-size:31px;color:#222;font-weight:300">教师：孙莉萍</div>
<div class="t" style="left:594.5px;top:419.5px;font-size:23.6px;color:#111">2022/9/5</div>
<!--/thumb1in--></div></div></div>
<div class="a" style="left:39.5px;top:379.5px;width:133.5px;height:84px;border:1px solid #d6d6d6;border-radius:5px;background:#fff;box-shadow:0 1px 1px rgba(0,0,0,.12)"></div>
<div class="a" style="left:40.5px;top:380.0px;width:131.5px;height:4.5px;background:#46485a;border-radius:4px 4px 0 0"></div>
<div class="a" style="left:40.5px;top:384.5px;width:131.5px;height:1.2px;background:#3e7f7c"></div>
<div class="a" style="left:119px;top:386.0px;width:28px;height:1px;background:#a9bcc2"></div>
<div class="a" style="left:39.5px;top:486px;width:133.5px;height:83.5px;border:1px solid #d6d6d6;border-radius:5px;background:#fff;box-shadow:0 1px 1px rgba(0,0,0,.12)"></div>
<div class="a" style="left:40.5px;top:486.5px;width:131.5px;height:4.5px;background:#46485a;border-radius:4px 4px 0 0"></div>
<div class="a" style="left:40.5px;top:491px;width:131.5px;height:1.2px;background:#3e7f7c"></div>
<div class="a" style="left:119px;top:492.5px;width:28px;height:1px;background:#a9bcc2"></div>
<div class="a" style="left:39.5px;top:592.5px;width:133.5px;height:84px;border:1px solid #d6d6d6;border-radius:5px;background:#fff;box-shadow:0 1px 1px rgba(0,0,0,.12)"></div>
<div class="a" style="left:40.5px;top:593.0px;width:131.5px;height:4.5px;background:#46485a;border-radius:4px 4px 0 0"></div>
<div class="a" style="left:40.5px;top:597.5px;width:131.5px;height:1.2px;background:#3e7f7c"></div>
<div class="a" style="left:119px;top:599.0px;width:28px;height:1px;background:#a9bcc2"></div>
<div class="a" style="left:39.5px;top:699px;width:133.5px;height:60px;border:1px solid #d6d6d6;border-radius:5px 5px 0 0;background:#fff;box-shadow:0 1px 1px rgba(0,0,0,.12)"></div>
<div class="a" style="left:40.5px;top:699.5px;width:131.5px;height:4.5px;background:#46485a;border-radius:4px 4px 0 0"></div>
<div class="a" style="left:40.5px;top:704px;width:131.5px;height:1.2px;background:#3e7f7c"></div>
<div class="a" style="left:119px;top:705.5px;width:28px;height:1px;background:#a9bcc2"></div>
<div class="t" style="left:81px;top:390.5px;font-size:6.5px;font-weight:bold;color:#222">教室就座之原则</div>
<div class="t" style="left:73.5px;top:406px;font-size:7px;color:#333"><span style="color:#1a2fd6;font-weight:bold">•分&nbsp;&nbsp;数</span>（一人一隔）</div>
<div class="t" style="left:68.5px;top:425px;font-size:7px;color:#333"><span style="color:#1a2fd6;font-weight:bold">•座&nbsp;&nbsp;&nbsp;中</span>（以屏幕为准）</div>
<div class="t" style="left:67px;top:444px;font-size:7px;color:#333"><span style="color:#e01010;font-weight:bold">•分&nbsp;&nbsp;&nbsp;组</span>（8人，前4后4）</div>
<div class="t" style="left:48.5px;top:502px;font-size:6.5px;font-weight:bold;color:#d43a10;letter-spacing:3.5px">课程性质</div>
<div class="t" style="left:82.5px;top:513px;font-size:6.5px;font-weight:bold;color:#111">思想政治理论课。</div>
<div class="t" style="left:82.5px;top:532px;font-size:6.5px;font-weight:bold;color:#111">意识形态导向课。</div>
<div class="t" style="left:49px;top:609px;font-size:6.5px;font-weight:bold;color:#d43a10;letter-spacing:3.5px">课程功能</div>
<div class="t" style="left:90.5px;top:620.5px;font-size:6.5px;font-weight:bold;color:#111">•<span style="color:#1a2fd6">学分</span>修养。</div>
<div class="t" style="left:90.5px;top:638.5px;font-size:6.5px;font-weight:bold;color:#111">•<span style="color:#1a2fd6">考研</span>课程。</div>
<div class="t" style="left:49px;top:709.5px;font-size:6.5px;font-weight:bold;color:#d43a10;letter-spacing:2.5px">教学方式</div>
<div class="t" style="left:49px;top:721.5px;font-size:5px;letter-spacing:.45px;color:#777;line-height:6.2px"><b style="color:#111">•课堂讨论</b>。提前布置讲习题，以小组为单位讨论，<br>&nbsp;&nbsp;为单位陈述讨论，由小组代表或同学个人发表见解<br>&nbsp;&nbsp;或总结。<br><b style="color:#111">•网络学习【超星学习通】</b>。教师指定网上学习资源<br>&nbsp;&nbsp;，由学生课前上网下载学习，完成作业。</div>
<div class="a" style="left:0;top:752px;width:214px;height:1px;background:#efefef"></div>
<!-- editor -->
<svg style="left:1348.5px;top:257.5px" width="11" height="9"><path d="M5.5 .5L10.5 8H.5z" fill="#777" stroke="#777" stroke-linejoin="round"/></svg>
<div class="a" style="left:1349.5px;top:270px;width:8.5px;height:19px;border-radius:4.5px;background:#7a7a7a"></div>
<svg style="left:1348.5px;top:648px" width="11" height="9"><path d="M.5 .5h10L5.5 8z" fill="#777" stroke="#777" stroke-linejoin="round"/></svg>
<svg style="left:1348.5px;top:663px" width="11" height="14"><path d="M5.5 .5L10.5 7H.5zM5.5 6L10.5 13H.5z" fill="#777" stroke="#777" stroke-linejoin="round"/></svg>
<svg style="left:1348.5px;top:682px" width="11" height="14"><path d="M.5 .5h10L5.5 7zM.5 6h10L5.5 13z" fill="#777" stroke="#777" stroke-linejoin="round"/></svg>
<div class="a" style="left:1307px;top:670px;width:2px;height:2px;background:#1f6fd0"></div>
<div id="slide" class="a" style="left:426px;top:257.5px;width:710.5px;height:444px;background:#fff;border:1px solid #d4d4d4;overflow:hidden"><div id="slidein"><div class="a" style="left:0;top:0;width:606px;height:19.5px;background:#46465a"></div>
<div class="a" style="left:0;top:19.5px;width:606px;height:6.5px;background:#3f7d7b"></div>
<div class="a" style="left:420px;top:26px;width:186px;height:3.5px;background:#3f7d7b"></div>
<div class="a" style="left:0;top:26px;width:420px;height:3px;background:#a8bec3"></div>
<div class="a" style="left:420px;top:29.5px;width:186px;height:2px;background:#a8bec3"></div>
<div class="a" style="left:420px;top:34.5px;width:186px;height:3.5px;background:#a8bec3"></div>
<div class="a" style="left:420px;top:38px;width:152px;height:2px;background:#a8bec3"></div>
<svg style="left:610px;top:2px" width="96" height="82">
<ellipse cx="48" cy="40.2" rx="45.7" ry="37.9" fill="#990f10"/>
<ellipse cx="48.3" cy="40.5" rx="31.8" ry="26.1" fill="#fdfbf8"/>
<path d="M27 21h16.5l-4 12 4 14H27l5-13z" fill="#f2a02a"/>
<path d="M52.5 21H69l-5 13 5 13H52.5l4-14z" fill="#eea028"/>
<path d="M27 21h8l-3 13 5 13h-10l5-13z" fill="#f68a20" opacity=".7"/>
<circle cx="47.8" cy="34.7" r="11" fill="#f5d9a0"/>
<path d="M40 30l10 9M43 27l10 9M46 25l8 7M39 34l7 6" stroke="#e7b868" stroke-width="1.6"/>
<rect x="24" y="53" width="47" height="1.8" fill="#5a3a30" opacity=".85"/>
<rect x="41" y="57.5" width="13" height="1.2" fill="#6a4a40" opacity=".7"/>
<g fill="#f2d6cc" font-size="6.5" font-family="Liberation Serif" font-weight="bold" text-anchor="middle"><text x="13.3" y="28.6">南</text><text x="27.4" y="16.6">昌</text><text x="48.3" y="10.3">花</text><text x="68.7" y="15.600000000000001">学</text><text x="83.3" y="29.1">院</text><text x="12.3" y="53.199999999999996">明</text><text x="17.5" y="62.599999999999994">德</text><text x="25.3" y="69.8">励</text><text x="35.8" y="74.6">志</text><text x="58.8" y="74.0">博</text><text x="68.7" y="68.8">学</text><text x="76.5" y="61.5">笃</text><text x="83.8" y="53.699999999999996">行</text><circle cx="47.5" cy="72" r=".8"/></g>
</svg>
<div class="wa" style="color:#2a2688;transform:matrix(0.8111,-0.1511,0.0617,1.1160,59.36,117.94)">马</div>
<div class="wa" style="color:#2a2688;transform:matrix(0.8111,-0.1511,0.0617,1.1160,60.36,117.27)">马</div>
<div class="wa" style="color:#2a2688;transform:matrix(0.8111,-0.1511,0.0617,1.1160,61.36,116.60)">马</div>
<div class="wa" style="color:#2a2688;transform:matrix(0.8111,-0.1511,0.0617,1.1160,62.36,115.94)">马</div>
<div class="wa" style="color:#2a2688;transform:matrix(0.8111,-0.1511,0.0617,1.1160,63.36,115.27)">马</div>
<div class="wa" style="color:#2a2688;transform:matrix(0.8111,-0.1511,0.0617,1.1160,64.36,114.60)">马</div>
<div class="wa" style="color:#302d96;transform:matrix(0.8111,-0.1511,0.0617,1.1160,65.36,113.94)">马</div>
<div class="wa" style="color:#302d96;transform:matrix(0.8111,-0.1511,0.0617,1.1160,66.36,113.27)">马</div>
<div class="wa" style="color:#302d96;transform:matrix(0.8111,-0.1511,0.0617,1.1160,67.36,112.60)">马</div>
<div class="wa" style="color:#302d96;transform:matrix(0.8111,-0.1511,0.0617,1.1160,68.36,111.94)">马</div>
<div class="wa" style="color:#302d96;transform:matrix(0.8111,-0.1511,0.0617,1.1160,69.36,111.27)">马</div>
<div class="wa" style="color:#302d96;transform:matrix(0.8111,-0.1511,0.0617,1.1160,70.36,110.60)">马</div>
<div class="wa" style="color:#2a2688;transform:matrix(0.5670,-0.1282,0.0412,0.9647,126.68,112.23)">克</div>
<div class="wa" style="color:#2a2688;transform:matrix(0.5670,-0.1282,0.0412,0.9647,127.60,111.56)">克</div>
<div class="wa" style="color:#2a2688;transform:matrix(0.5670,-0.1282,0.0412,0.9647,128.51,110.89)">克</div>
<div class="wa" style="color:#2a2688;transform:matrix(0.5670,-0.1282,0.0412,0.9647,129.43,110.23)">克</div>
<div class="wa" style="color:#2a2688;transform:matrix(0.5670,-0.1282,0.0412,0.9647,130.35,109.56)">克</div>
<div class="wa" style="color:#2a2688;transform:matrix(0.5670,-0.1282,0.0412,0.9647,131.26,108.89)">克</div>
<div class="wa" style="color:#302d96;transform:matrix(0.5670,-0.1282,0.0412,0.9647,132.18,108.23)">克</div>
<div class="wa" style="color:#302d96;transform:matrix(0.5670,-0.1282,0.0412,0.9647,133.10,107.56)">克</div>
<div class="wa" style="color:#302d96;transform:matrix(0.5670,-0.1282,0.0412,0.9647,134.01,106.89)">克</div>
<div class="wa" style="color:#302d96;transform:matrix(0.5670,-0.1282,0.0412,0.9647,134.93,106.23)">克</div>
<div class="wa" style="color:#302d96;transform:matrix(0.5670,-0.1282,0.0412,0.9647,135.85,105.56)">克</div>
<div class="wa" style="color:#302d96;transform:matrix(0.5670,-0.1282,0.0412,0.9647,136.76,104.89)">克</div>
<div class="wa" style="color:#2a2688;transform:matrix(0.6802,-0.0755,0.0596,0.9091,186.75,91.72)">思</div>
<div class="wa" style="color:#2a2688;transform:matrix(0.6802,-0.0755,0.0596,0.9091,187.58,91.14)">思</div>
<div class="wa" style="color:#2a2688;transform:matrix(0.6802,-0.0755,0.0596,0.9091,188.42,90.55)">思</div>
<div class="wa" style="color:#2a2688;transform:matrix(0.6802,-0.0755,0.0596,0.9091,189.25,89.97)">思</div>
<div class="wa" style="color:#2a2688;transform:matrix(0.6802,-0.0755,0.0596,0.9091,190.08,89.39)">思</div>
<div class="wa" style="color:#2a2688;transform:matrix(0.6802,-0.0755,0.0596,0.9091,190.92,88.80)">思</div>
<div class="wa" style="color:#302d96;transform:matrix(0.6802,-0.0755,0.0596,0.9091,191.75,88.22)">思</div>
<div class="wa" style="color:#302d96;transform:matrix(0.6802,-0.0755,0.0596,0.9091,192.58,87.64)">思</div>
<div class="wa" style="color:#302d96;transform:matrix(0.6802,-0.0755,0.0596,0.9091,193.42,87.05)">思</div>
<div class="wa" style="color:#302d96;transform:matrix(0.6802,-0.0755,0.0596,0.9091,194.25,86.47)">思</div>
<div class="wa" style="color:#302d96;transform:matrix(0.6802,-0.0755,0.0596,0.9091,195.08,85.89)">思</div>
<div class="wa" style="color:#302d96;transform:matrix(0.6802,-0.0755,0.0596,0.9091,195.92,85.30)">思</div>
<div class="wa" style="color:#2a2688;transform:matrix(0.7451,-0.1059,0.0408,0.7561,249.05,90.54)">主</div>
<div class="wa" style="color:#2a2688;transform:matrix(0.7451,-0.1059,0.0408,0.7561,249.80,90.04)">主</div>
<div class="wa" style="color:#2a2688;transform:matrix(0.7451,-0.1059,0.0408,0.7561,250.55,89.54)">主</div>
<div class="wa" style="color:#2a2688;transform:matrix(0.7451,-0.1059,0.0408,0.7561,251.30,89.04)">主</div>
<div class="wa" style="color:#2a2688;transform:matrix(0.7451,-0.1059,0.0408,0.7561,252.05,88.54)">主</div>
<div class="wa" style="color:#2a2688;transform:matrix(0.7451,-0.1059,0.0408,0.7561,252.80,88.04)">主</div>
<div class="wa" style="color:#302d96;transform:matrix(0.7451,-0.1059,0.0408,0.7561,253.55,87.54)">主</div>
<div class="wa" style="color:#302d96;transform:matrix(0.7451,-0.1059,0.0408,0.7561,254.30,87.04)">主</div>
<div class="wa" style="color:#302d96;transform:matrix(0.7451,-0.1059,0.0408,0.7561,255.05,86.54)">主</div>
<div class="wa" style="color:#302d96;transform:matrix(0.7451,-0.1059,0.0408,0.7561,255.80,86.04)">主</div>
<div class="wa" style="color:#302d96;transform:matrix(0.7451,-0.1059,0.0408,0.7561,256.55,85.54)">主</div>
<div class="wa" style="color:#302d96;transform:matrix(0.7451,-0.1059,0.0408,0.7561,257.30,85.04)">主</div>
<div class="wa" style="color:#2a2688;transform:matrix(0.6186,-0.1255,0.0374,0.6411,314.68,78.83)">义</div>
<div class="wa" style="color:#2a2688;transform:matrix(0.6186,-0.1255,0.0374,0.6411,315.34,78.33)">义</div>
<div class="wa" style="color:#2a2688;transform:matrix(0.6186,-0.1255,0.0374,0.6411,316.01,77.83)">义</div>
<div class="wa" style="color:#2a2688;transform:matrix(0.6186,-0.1255,0.0374,0.6411,316.68,77.33)">义</div>
<div class="wa" style="color:#2a2688;transform:matrix(0.6186,-0.1255,0.0374,0.6411,317.34,76.83)">义</div>
<div class="wa" style="color:#2a2688;transform:matrix(0.6186,-0.1255,0.0374,0.6411,318.01,76.33)">义</div>
<div class="wa" style="color:#302d96;transform:matrix(0.6186,-0.1255,0.0374,0.6411,318.68,75.83)">义</div>
<div class="wa" style="color:#302d96;transform:matrix(0.6186,-0.1255,0.0374,0.6411,319.34,75.33)">义</div>
<div class="wa" style="color:#302d96;transform:matrix(0.6186,-0.1255,0.0374,0.6411,320.01,74.83)">义</div>
<div class="wa" style="color:#302d96;transform:matrix(0.6186,-0.1255,0.0374,0.6411,320.68,74.33)">义</div>
<div class="wa" style="color:#302d96;transform:matrix(0.6186,-0.1255,0.0374,0.6411,321.34,73.83)">义</div>
<div class="wa" style="color:#302d96;transform:matrix(0.6186,-0.1255,0.0374,0.6411,322.01,73.33)">义</div>
<div class="wa wf" style="background-image:linear-gradient(#137a9a 0%,#1390b3 45%,#10c3ee 100%);transform:matrix(0.8111,-0.1511,0.0617,1.1160,71.36,109.94)">马</div>
<div class="wa wf" style="background-image:linear-gradient(#137a9a 0%,#1390b3 45%,#10c3ee 100%);transform:matrix(0.5670,-0.1282,0.0412,0.9647,137.68,104.23)">克</div>
<div class="wa wf" style="background-image:linear-gradient(#137a9a 0%,#1390b3 45%,#10c3ee 100%);transform:matrix(0.6802,-0.0755,0.0596,0.9091,196.75,84.72)">思</div>
<div class="wa wf" style="background-image:linear-gradient(#137a9a 0%,#1390b3 45%,#10c3ee 100%);transform:matrix(0.7451,-0.1059,0.0408,0.7561,258.05,84.54)">主</div>
<div class="wa wf" style="background-image:linear-gradient(#137a9a 0%,#1390b3 45%,#10c3ee 100%);transform:matrix(0.6186,-0.1255,0.0374,0.6411,322.68,72.83)">义</div>
<div class="wa" style="color:#2a2688;transform:matrix(0.6186,0.0196,-0.0092,0.6010,354.43,150.45)">基</div>
<div class="wa" style="color:#2a2688;transform:matrix(0.6186,0.0196,-0.0092,0.6010,355.43,149.78)">基</div>
<div class="wa" style="color:#2a2688;transform:matrix(0.6186,0.0196,-0.0092,0.6010,356.43,149.12)">基</div>
<div class="wa" style="color:#2a2688;transform:matrix(0.6186,0.0196,-0.0092,0.6010,357.43,148.45)">基</div>
<div class="wa" style="color:#2a2688;transform:matrix(0.6186,0.0196,-0.0092,0.6010,358.43,147.78)">基</div>
<div class="wa" style="color:#2a2688;transform:matrix(0.6186,0.0196,-0.0092,0.6010,359.43,147.12)">基</div>
<div class="wa" style="color:#302d96;transform:matrix(0.6186,0.0196,-0.0092,0.6010,360.43,146.45)">基</div>
<div class="wa" style="color:#302d96;transform:matrix(0.6186,0.0196,-0.0092,0.6010,361.43,145.78)">基</div>
<div class="wa" style="color:#302d96;transform:matrix(0.6186,0.0196,-0.0092,0.6010,362.43,145.12)">基</div>
<div class="wa" style="color:#302d96;transform:matrix(0.6186,0.0196,-0.0092,0.6010,363.43,144.45)">基</div>
<div class="wa" style="color:#302d96;transform:matrix(0.6186,0.0196,-0.0092,0.6010,364.43,143.78)">基</div>
<div class="wa" style="color:#302d96;transform:matrix(0.6186,0.0196,-0.0092,0.6010,365.43,143.12)">基</div>
<div class="wa" style="color:#2a2688;transform:matrix(0.6200,0.0381,-0.0186,0.6373,426.66,149.63)">本</div>
<div class="wa" style="color:#2a2688;transform:matrix(0.6200,0.0381,-0.0186,0.6373,427.58,148.96)">本</div>
<div class="wa" style="color:#2a2688;transform:matrix(0.6200,0.0381,-0.0186,0.6373,428.50,148.29)">本</div>
<div class="wa" style="color:#2a2688;transform:matrix(0.6200,0.0381,-0.0186,0.6373,429.41,147.63)">本</div>
<div class="wa" style="color:#2a2688;transform:matrix(0.6200,0.0381,-0.0186,0.6373,430.33,146.96)">本</div>
<div class="wa" style="color:#2a2688;transform:matrix(0.6200,0.0381,-0.0186,0.6373,431.25,146.29)">本</div>
<div class="wa" style="color:#302d96;transform:matrix(0.6200,0.0381,-0.0186,0.6373,432.16,145.63)">本</div>
<div class="wa" style="color:#302d96;transform:matrix(0.6200,0.0381,-0.0186,0.6373,433.08,144.96)">本</div>
<div class="wa" style="color:#302d96;transform:matrix(0.6200,0.0381,-0.0186,0.6373,434.00,144.29)">本</div>
<div class="wa" style="color:#302d96;transform:matrix(0.6200,0.0381,-0.0186,0.6373,434.91,143.63)">本</div>
<div class="wa" style="color:#302d96;transform:matrix(0.6200,0.0381,-0.0186,0.6373,435.83,142.96)">本</div>
<div class="wa" style="color:#302d96;transform:matrix(0.6200,0.0381,-0.0186,0.6373,436.75,142.29)">本</div>
<div class="wa" style="color:#2a2688;transform:matrix(0.6490,0.0196,-0.0299,0.7309,499.53,148.99)">原</div>
<div class="wa" style="color:#2a2688;transform:matrix(0.6490,0.0196,-0.0299,0.7309,500.28,148.32)">原</div>
<div class="wa" style="color:#2a2688;transform:matrix(0.6490,0.0196,-0.0299,0.7309,501.03,147.66)">原</div>
<div class="wa" style="color:#2a2688;transform:matrix(0.6490,0.0196,-0.0299,0.7309,501.78,146.99)">原</div>
<div class="wa" style="color:#2a2688;transform:matrix(0.6490,0.0196,-0.0299,0.7309,502.53,146.32)">原</div>
<div class="wa" style="color:#2a2688;transform:matrix(0.6490,0.0196,-0.0299,0.7309,503.28,145.66)">原</div>
<div class="wa" style="color:#302d96;transform:matrix(0.6490,0.0196,-0.0299,0.7309,504.03,144.99)">原</div>
<div class="wa" style="color:#302d96;transform:matrix(0.6490,0.0196,-0.0299,0.7309,504.78,144.32)">原</div>
<div class="wa" style="color:#302d96;transform:matrix(0.6490,0.0196,-0.0299,0.7309,505.53,143.66)">原</div>
<div class="wa" style="color:#302d96;transform:matrix(0.6490,0.0196,-0.0299,0.7309,506.28,142.99)">原</div>
<div class="wa" style="color:#302d96;transform:matrix(0.6490,0.0196,-0.0299,0.7309,507.03,142.32)">原</div>
<div class="wa" style="color:#302d96;transform:matrix(0.6490,0.0196,-0.0299,0.7309,507.78,141.66)">原</div>
<div class="wa" style="color:#2a2688;transform:matrix(0.6827,0.0202,-0.0442,0.8211,571.34,152.26)">理</div>
<div class="wa" style="color:#2a2688;transform:matrix(0.6827,0.0202,-0.0442,0.8211,572.01,151.59)">理</div>
<div class="wa" style="color:#2a2688;transform:matrix(0.6827,0.0202,-0.0442,0.8211,572.67,150.93)">理</div>
<div class="wa" style="color:#2a2688;transform:matrix(0.6827,0.0202,-0.0442,0.8211,573.34,150.26)">理</div>
<div class="wa" style="color:#2a2688;transform:matrix(0.6827,0.0202,-0.0442,0.8211,574.01,149.59)">理</div>
<div class="wa" style="color:#2a2688;transform:matrix(0.6827,0.0202,-0.0442,0.8211,574.67,148.93)">理</div>
<div class="wa" style="color:#302d96;transform:matrix(0.6827,0.0202,-0.0442,0.8211,575.34,148.26)">理</div>
<div class="wa" style="color:#302d96;transform:matrix(0.6827,0.0202,-0.0442,0.8211,576.01,147.59)">理</div>
<div class="wa" style="color:#302d96;transform:matrix(0.6827,0.0202,-0.0442,0.8211,576.67,146.93)">理</div>
<div class="wa" style="color:#302d96;transform:matrix(0.6827,0.0202,-0.0442,0.8211,577.34,146.26)">理</div>
<div class="wa" style="color:#302d96;transform:matrix(0.6827,0.0202,-0.0442,0.8211,578.01,145.59)">理</div>
<div class="wa" style="color:#302d96;transform:matrix(0.6827,0.0202,-0.0442,0.8211,578.67,144.93)">理</div>
<div class="wa wf" style="background-image:linear-gradient(#14809f 0%,#1298bb 45%,#0fc2ec 100%);transform:matrix(0.6186,0.0196,-0.0092,0.6010,366.43,142.45)">基</div>
<div class="wa wf" style="background-image:linear-gradient(#14809f 0%,#1298bb 45%,#0fc2ec 100%);transform:matrix(0.6200,0.0381,-0.0186,0.6373,437.66,141.63)">本</div>
<div class="wa wf" style="background-image:linear-gradient(#1684a6 0%,#1590b4 60%,#14a2c8 100%);transform:matrix(0.6490,0.0196,-0.0299,0.7309,508.53,140.99)">原</div>
<div class="wa wf" style="background-image:linear-gradient(#137f9f,#1488a8);transform:matrix(0.6827,0.0202,-0.0442,0.8211,579.34,144.26)">理</div>
<div class="t" style="left:306px;top:333px;font-size:31px;color:#111">马克思主义学院</div>
<div class="t" style="left:321px;top:370px;font-size:31px;color:#222;font-weight:300">教师：孙莉萍</div>
<div class="t" style="left:594.5px;top:419.5px;font-size:23.6px;color:#111">2022/9/5</div>
<!--/slidein--></div></div>
<svg id="cursor" style="left:1108px;top:579px" width="14" height="20"><path d="M1 1v15l3.5-3.3 2.7 6 2.3-1-2.7-5.8H12z" fill="#fff" stroke="#333" stroke-width="1" stroke-linejoin="round"/></svg>
<div class="a" style="left:215px;top:719.5px;width:1148px;height:1px;background:#dcdcdc"></div>
<div class="a" style="left:215px;top:720.5px;width:1148px;height:32px;background:#f3f3f3"></div>
<div class="t" style="left:226.5px;top:728px;font-size:15.6px;letter-spacing:-0.35px;color:#444">单击此处添加备注</div>
<svg style="left:1347.5px;top:725.5px" width="10" height="8"><path d="M5 .5L9.5 7H.5z" fill="#777" stroke="#777" stroke-linejoin="round"/></svg>
<svg style="left:1347.5px;top:741px" width="10" height="8"><path d="M.5 .5h9L5 7z" fill="#777" stroke="#777" stroke-linejoin="round"/></svg>
<!-- status -->
<div class="a" style="left:0;top:753px;width:1363px;height:24px;background:#f3f3f3"></div>
<div class="t" style="left:8px;top:758.5px;font-size:13px;color:#3a3a3a">幻灯片 第 1 张，共 52 张</div>
<svg style="left:170px;top:758px" width="16" height="16"><path d="M1.5 2.5c2-1 4.5-1 6.5.8 2-1.8 4.5-1.8 6.5-.8v10c-2-1-4.5-1-6.5.8-2-1.8-4.5-1.8-6.5-.8z" fill="none" stroke="#444" stroke-width="1.2"/><path d="M8 3.3v10.5" stroke="#444" stroke-width="1.1"/><path d="M9.5 10.5l1.5 1.5 3-3" fill="none" stroke="#444" stroke-width="1.1"/></svg>
<div class="t" style="left:203px;top:758.5px;font-size:13px;color:#3a3a3a">中文(中国)</div>
<svg style="left:279px;top:757px" width="16" height="17"><circle cx="7" cy="3" r="2" fill="none" stroke="#444" stroke-width="1.1"/><path d="M1.5 6.5l5.5 1.5 5.5-1.5M7 8v3l-3 5M7 11l3 5" fill="none" stroke="#444" stroke-width="1.1"/><path d="M11 9.5l2 2 2.5-3" fill="none" stroke="#444" stroke-width="1.1"/></svg>
<div class="t" style="left:298px;top:758.5px;font-size:13px;color:#3a3a3a">辅助功能: 不可用</div>
<svg style="left:907px;top:757px" width="20" height="17"><path d="M2 8h16M2 12h16M2 16h16" stroke="#444" stroke-width="1.1"/><path d="M6 5l4-3.5L14 5" fill="none" stroke="#444" stroke-width="1.1"/></svg>
<div class="t" style="left:928px;top:758.5px;font-size:13px;color:#3a3a3a">备注</div>
<div class="a" style="left:972px;top:754px;width:42px;height:22px;background:#dedede"></div>
<svg style="left:986px;top:758px" width="16" height="14"><rect x=".7" y=".7" width="14.5" height="12" fill="none" stroke="#444" stroke-width="1.2"/><rect x="4.5" y="3.5" width="8" height="6" fill="none" stroke="#444" stroke-width="1.1"/><path d="M2.5 3v7" stroke="#444"/></svg>
<svg style="left:1028px;top:757px" width="16" height="16"><rect x="1" y="1" width="5.5" height="5.5" fill="none" stroke="#444" stroke-width="1.2"/><rect x="9" y="1" width="5.5" height="5.5" fill="none" stroke="#444" stroke-width="1.2"/><rect x="1" y="9" width="5.5" height="5.5" fill="none" stroke="#444" stroke-width="1.2"/><rect x="9" y="9" width="5.5" height="5.5" fill="none" stroke="#444" stroke-width="1.2"/></svg>
<svg style="left:1070px;top:757px" width="16" height="16"><path d="M1 1.5h6l1 1 1-1h6v13H9l-1 1-1-1H1z" fill="none" stroke="#444" stroke-width="1.2"/><path d="M8 2.5v12M3 5h3M3 8h3M10 5h3M10 8h3" stroke="#444"/></svg>
<svg style="left:1113px;top:757px" width="16" height="17"><path d="M1 1.5h14M2 1.5v8h12v-8M8 9.5v6M5 15.5h6" fill="none" stroke="#444" stroke-width="1.2"/><rect x="5" y="4" width="6" height="3" fill="none" stroke="#444"/></svg>
<div class="a" style="left:1149px;top:765px;width:7px;height:1px;background:#555"></div>
<div class="a" style="left:1162px;top:764.5px;width:105px;height:1px;background:#555"></div>
<div class="a" style="left:1195px;top:759px;width:6px;height:12px;background:#444"></div>
<div class="a" style="left:1214px;top:762px;width:1px;height:6px;background:#555"></div>
<div class="t" style="left:1272px;top:758px;font-size:13px;color:#444">+</div>
<div class="t" style="left:1295px;top:758.5px;font-size:13px;color:#3a3a3a">70%</div>
<svg style="left:1341px;top:756px" width="18" height="18"><rect x="5.5" y="5.5" width="7" height="7" fill="none" stroke="#444" stroke-width="1.2"/><path d="M9 .8L7 2.8M9 .8l2 2M9 17.2l-2-2M9 17.2l2-2M.8 9l2-2M.8 9l2 2M17.2 9l-2-2M17.2 9l-2 2" fill="none" stroke="#444" stroke-width="1.1"/></svg>

<!-- ============ TASKBAR ============ -->
<div class="a" style="left:0;top:777px;width:1363px;height:51px;background:linear-gradient(#cdeaef,#d3eff4);border-top:1px solid #c2d2d6"></div>
<!-- taskbar -->
<svg style="left:22.5px;top:791px" width="25" height="25"><rect x="0" y="0" width="11.8" height="11.8" fill="#3fa9ea"/><rect x="12.8" y="0" width="11.8" height="11.8" fill="#1c8be6"/><rect x="0" y="12.8" width="11.8" height="11.8" fill="#208fe4"/><rect x="12.8" y="12.8" width="11.8" height="11.8" fill="#0f76d6"/><path d="M0 0h11.8L0 11.8z" fill="#57c0f0" opacity=".6"/></svg>
<svg style="left:69px;top:789px" width="26" height="27"><rect x="7" y="2" width="18" height="17" rx="2" fill="#f4f4f4" stroke="#ddd"/><rect x="0.5" y="8" width="19" height="18" rx="2" fill="#333"/><rect x="7" y="8" width="12.5" height="11" fill="#bdbdbd"/></svg>
<svg style="left:116px;top:783px" width="36" height="28"><path d="M4 22c-2-2 0-6 4-5 1-4 6-5 9-2 3-1 6 2 5 5 3 0 4 3 2 4-1 1-3 1-5 1H8c-2 0-3-1-4-3z" fill="#d8e0ee"/><path d="M6 17l8-6" stroke="#b9c6e0" stroke-width="2"/><rect x="9" y="1" width="26" height="17" rx="8.5" fill="#fafafa"/><text x="13" y="14.5" font-family="Liberation Sans" font-size="12" fill="#222">19°</text></svg>
<svg style="left:162px;top:791px" width="28" height="25"><path d="M1 3a2 2 0 0 1 2-2h7l3 3h12a2 2 0 0 1 2 2v17H1z" fill="#f5b83d"/><rect x="1" y="6" width="26" height="17" rx="1" fill="#ffd35a"/><rect x="8" y="16" width="12" height="7" rx="1" fill="#2277d4"/></svg>
<svg style="left:209px;top:790px" width="27" height="26"><circle cx="13.5" cy="13" r="12.5" fill="#1a8fd6"/><path d="M26 13c0-5-4-12-12-12C6 1 1 7 1 13c2-6 7-8 11-8 6 0 9 4 9 7 0 2-2 3-4 3H9c0 4 3 7 7 7 3 0 6-1 8-3 1-2 2-4 2-6z" fill="#54d178"/><path d="M9 14c0 5 4 9 9 9-5 3-13 2-16-6 2 1 5-1 7-3z" fill="#0c5aa6"/><circle cx="15" cy="13.5" r="4" fill="#cfecf0"/></svg>
<svg style="left:257px;top:790px" width="26" height="26"><rect x="0" y="0" width="26" height="26" fill="#2e5de0"/><path d="M0 0h26v26z" fill="#3f4be0" opacity=".6"/><path d="M5 19l6-12h3L8 19zM11 19l6-12h3l-6 12z" fill="#fff"/><path d="M17 19l3-7 2 7z" fill="#fff"/></svg>
<svg style="left:305px;top:791px" width="24" height="24"><circle cx="12" cy="12" r="11.5" fill="#6ea3d6"/><path d="M6 6c2 0 4 2 3 4s-3 1-3 4-3 2-4 0c0-4 2-7 4-8zM13 4c2-1 6 1 7 4-2 1-3 3-1 5 1 2-1 4-3 5 0-3-2-4-4-3-1-3 1-5 2-6-1-2-2-3-1-5z" fill="#e8f0f7" opacity=".85"/><circle cx="12" cy="12" r="11.5" fill="none" stroke="#9bb8d4"/></svg>
<div class="a" style="left:342px;top:782.5px;width:40.5px;height:41.5px;border-radius:5px;background:#e2f4f7;border:1px solid #d3e6ea"></div>
<svg style="left:352px;top:791px" width="23" height="24"><rect x="0" y="0" width="23" height="24" rx="3" fill="#1a78f0"/><path d="M3 16l4.5-6 3.5 3.5 3.5-5 5.5 7.5h-4l-2-2.5-2 2.5h-2l-2-2.5L7 16z" fill="#fff"/></svg>
<div class="a" style="left:355px;top:819.5px;width:17px;height:3px;border-radius:1.5px;background:#1a6fd4"></div>
<svg style="left:396px;top:790px" width="28" height="25"><circle cx="15" cy="12.5" r="12" fill="#e0603a"/><path d="M15 .5A12 12 0 0 1 27 12.5H15z" fill="#f3906a"/><path d="M15 24.5A12 12 0 0 0 27 12.5H15z" fill="#c8401e"/><rect x="0.5" y="6" width="13" height="13" rx="1.5" fill="#c43e1c"/><text x="7" y="16.5" font-family="Liberation Sans" font-weight="bold" font-size="11" fill="#fff" text-anchor="middle">P</text></svg>
<div class="a" style="left:408px;top:820px;width:6px;height:3px;border-radius:1.5px;background:#777"></div>
<svg style="left:1009px;top:798px" width="10" height="7"><path d="M.8 6L5 1.5 9.2 6" fill="none" stroke="#333" stroke-width="1.2"/></svg>
<svg style="left:1032px;top:795px" width="21" height="13"><path d="M4.5 12C2 12 1 10.5 1 9c0-2 1.5-3 3.3-3C5 3 7.5 1 10.5 1c3.5 0 5.5 2.5 5.8 5 2.5 0 4 1.5 4 3.3S19 12 17 12z" fill="#e4e8ea" stroke="#3a3a3a" stroke-width="1.2"/></svg>
<svg style="left:1065px;top:792px" width="13" height="19"><rect x="3.5" y="1" width="6" height="11" rx="3" fill="none" stroke="#2f6fcf" stroke-width="1.3"/><path d="M1 8c0 3.5 2.5 5.5 5.5 5.5S12 11.5 12 8M6.5 13.5V18" fill="none" stroke="#2f6fcf" stroke-width="1.2"/></svg>
<div class="t" style="left:1097px;top:794px;font-size:16px;color:#333">中</div>
<div class="t" style="left:1138px;top:794px;font-size:16px;color:#333">拼</div>
<svg style="left:1177px;top:795px" width="18" height="14"><path d="M1 5a11.5 11.5 0 0 1 16 0M3.5 7.5a8 8 0 0 1 11 0M6 10a4.5 4.5 0 0 1 6 0" fill="none" stroke="#333" stroke-width="1.3"/><circle cx="9" cy="12.3" r="1.3" fill="#333"/></svg>
<svg style="left:1203px;top:795px" width="18" height="15"><path d="M1.5 5h3l4-3.5v12l-4-3.5h-3z" fill="none" stroke="#333" stroke-width="1.2"/><path d="M11 5c1 1 1 4 0 5M13.5 3c2 2 2 7 0 9" fill="none" stroke="#888" stroke-width="1.1"/></svg>
<svg style="left:1228px;top:794px" width="20" height="14"><rect x="5" y="3" width="13" height="9" rx="1" fill="#333"/><rect x="7" y="5" width="9" height="5" fill="#555"/><path d="M1 1l4 3" stroke="#333" stroke-width="1.5"/><circle cx="2.5" cy="2" r="2" fill="#333"/></svg>
<div class="t" style="left:1287.5px;top:787.5px;font-size:12.5px;color:#222">10:22</div>
<div class="t" style="left:1265px;top:804.5px;font-size:12.8px;color:#222">2022/9/5</div>
<div class="a" style="left:1293px;top:783px;width:2px;height:2px;border-radius:50%;background:#1f6fd0"></div>
<svg style="left:1327px;top:794px" width="16" height="16"><path d="M6 1.5A7 7 0 1 0 14.5 10 6 6 0 0 1 6 1.5z" fill="none" stroke="#333" stroke-width="1.2"/></svg>

<!-- ============ BOTTOM DARK ============ -->
<div class="a" style="left:0;top:828px;width:1363px;height:34px;background:#2a2d30"></div>
<!-- share label -->
<div class="a" style="left:0;top:836px;width:176px;height:26px;background:#111"></div>
<div class="a" style="left:1.5px;top:836px;width:23px;height:23px;background:#f07c1c"></div>
<svg style="left:1.5px;top:836px" width="23" height="23"><circle cx="11.5" cy="8" r="3.8" fill="#fff"/><path d="M4.5 19.5c0-4.5 3-7 7-7s7 2.5 7 7z" fill="#fff"/></svg>
<svg style="left:27px;top:838px" width="30" height="21"><rect x="1" y="2" width="13" height="11" rx="1.5" fill="#fff"/><path d="M4 10c1-3 3-4 6-4M8 4.5l2 1.5-1.5 2" fill="none" stroke="#222" stroke-width="1.2"/><path d="M3 15.5h9" stroke="#fff" stroke-width="1.5"/><rect x="19" y="1" width="5" height="10" rx="2.5" fill="#fff"/><path d="M16.5 8c0 3 2 5 5 5s5-2 5-5M21.5 13v4" fill="none" stroke="#fff" stroke-width="1.4"/><path d="M19 10h5" stroke="#3c3" stroke-width="1.5"/></svg>
<div class="t" style="left:59px;top:839.5px;font-size:16.5px;color:#fff">mv2的屏幕共享</div>

<!-- ============ RIGHT PANEL ============ -->
<div class="a" style="left:1363px;top:30px;width:237px;height:832px;background:linear-gradient(90deg,#5b5c60 0%,#55565a 4%,#4b4c50 12%,#404144 28%,#353638 42%,#2a2a2b 56%,#1e1e1e 70%,#121212 82%,#050505 94%,#000 100%)"></div>
<!-- panel -->
<div class="a" style="left:1372px;top:53px;width:220px;height:124px;border:1.5px solid #505155;border-radius:4px;background:#232427"></div>
<svg style="left:1450.5px;top:78px" width="60" height="60"><defs><clipPath id="c1"><circle cx="30" cy="30" r="29.5"/></clipPath></defs><g clip-path="url(#c1)">
<rect width="60" height="60" fill="#4a4a4a"/>
<path d="M0 0h60v60H0z" fill="#7a8a8a"/>
<path d="M0 0h22l8 30-10 20L0 45z" fill="#5aa0a0"/>
<path d="M5 5l15 0 6 22-14 10z" fill="#8cbcbc"/>
<path d="M40 0h20v40l-8 0-10-15z" fill="#3a9090"/>
<path d="M45 30h15v30H45z" fill="#202020"/>
<ellipse cx="32" cy="28" rx="14" ry="15" fill="#e8c9a8"/>
<path d="M22 26q5-3 8 0M34 26q5-3 8 0" fill="none" stroke="#8a4a40" stroke-width="1.2"/>
<path d="M10 60l4-14q14-6 26 0l4 14z" fill="#9a9a9a"/>
<path d="M18 50q10-4 20 0" fill="none" stroke="#7a7a7a" stroke-width="2"/>
<path d="M30 40h6v20h-6z" fill="#e6c9a6"/>
<ellipse cx="46" cy="46" rx="6" ry="8" fill="#e0c0a0"/>
<rect x="0" y="0" width="4" height="60" fill="#bbb" opacity=".5"/>
</g></svg>
<div class="a" style="left:1372.5px;top:153px;width:27.5px;height:21.5px;background:#121212"></div>
<div class="t" style="left:1373.5px;top:159.5px;font-size:11.5px;color:#fff">婷婷</div>
<div class="a" style="left:1371.5px;top:185px;width:221px;height:124px;border:1.5px solid #28c061;border-radius:4px;overflow:hidden;background:#0f2e62">
<svg style="left:0;top:0" width="218" height="121">
<rect x="0" y="0" width="68" height="121" fill="#0e1a1e"/>
<rect x="3" y="3" width="22" height="92" fill="#132428"/>
<rect x="23" y="28" width="27" height="66" fill="#1a363c"/>
<rect x="6" y="46" width="5" height="12" fill="#3a6a7a"/>
<path d="M0 96l68-10v35H0z" fill="#182224"/>
<rect x="68" y="0" width="76" height="121" fill="#0f2d60"/>
<rect x="96" y="0" width="40" height="121" fill="#123670"/>
<rect x="81" y="25" width="40" height="19" fill="#111"/>
<rect x="83" y="27" width="36" height="16" fill="#3a86c0"/>
<rect x="143" y="7" width="56" height="115" fill="#4a4f42"/>
<rect x="146" y="12" width="50" height="110" fill="#53584a"/>
<rect x="170" y="12" width="26" height="110" fill="#4b5044"/>
<rect x="199" y="0" width="19" height="121" fill="#1c2420"/>
<rect x="201" y="67" width="12" height="54" fill="#34444a"/>
<rect x="133.5" y="49" width="4.5" height="5" fill="#8aa0b8"/>
<path d="M149 72h9" stroke="#222" stroke-width="1.6"/>
<path d="M49 121l4-28q12-10 34-12l18 2 22-2q28 4 33 14l0 26z" fill="#193888"/>
<path d="M98 84l6 38M118 84l-8 38" stroke="#142c6c" stroke-width="2"/>
<path d="M70 60l10 40" stroke="#9ab8d8" stroke-width="1"/>
<path d="M80 84q-6-24 0-40 6-16 24-17 20 1 26 17 5 16 3 40z" fill="#16120e"/>
<path d="M86 52q0-13 17-14 16 1 16 14v18q0 18-16 19-17-1-17-19z" fill="#a08a7e"/>
<path d="M87 58h13v7H87zM105 58h13v7h-13z" fill="none" stroke="#151515" stroke-width="1.4"/>
<path d="M96 79h12" stroke="#6a4a40" stroke-width="1.3"/>
<rect x="96" y="86" width="14" height="8" fill="#90786a"/>
<rect x="98" y="108" width="12" height="8" fill="#2a5ab8"/>
<path d="M120 119h28v2h-28z" fill="#8ad0f0"/>
</svg></div>
<div class="a" style="left:1373.5px;top:286px;width:20px;height:20.5px;background:#f07c1c"></div>
<svg style="left:1373.5px;top:286px" width="20" height="20"><circle cx="10" cy="7" r="3.3" fill="#fff"/><path d="M4 17c0-4 2.5-6 6-6s6 2 6 6z" fill="#fff"/></svg>
<div class="a" style="left:1393.5px;top:286px;width:48px;height:20.5px;background:#121212"></div>
<svg style="left:1400px;top:288px" width="12" height="16"><rect x="3.5" y="1" width="5" height="8.5" rx="2.5" fill="#fff"/><path d="M1 6.5c0 3 2 5 5 5s5-2 5-5M6 11.5v3" fill="none" stroke="#fff" stroke-width="1.3"/><path d="M3.5 8h5" stroke="#3c3" stroke-width="1.3"/></svg>
<div class="t" style="left:1413px;top:290px;font-size:12px;color:#fff">mv2</div>
<div class="a" style="left:1372px;top:317px;width:220px;height:124px;border:1.5px solid #505155;border-radius:4px;background:#232427"></div>
<div class="a" style="left:1451px;top:342px;width:60px;height:60px;border-radius:50%;background:#0a6ef5"></div>
<div class="t" style="left:1463px;top:362.5px;font-size:17.5px;color:#fff">吉祥</div>
<div class="a" style="left:1373.5px;top:417px;width:120px;height:21.5px;background:#121212"></div><svg style="left:1378px;top:420px" width="15" height="16"><rect x="5" y="1" width="5" height="9" rx="2.5" fill="#fff"/><path d="M2.5 7c0 3 2 5 5 5s5-2 5-5M7.5 12v3" fill="none" stroke="#fff" stroke-width="1.3"/><path d="M1.5 14.5L13.5 2" stroke="#e0303a" stroke-width="1.6"/></svg><div class="t" style="left:1393px;top:422.5px;font-size:11.5px;color:#fff">10-护本-55-王吉祥</div>
<div class="a" style="left:1372px;top:449.5px;width:220px;height:124px;border:1.5px solid #505155;border-radius:4px;background:#232427"></div>
<svg style="left:1451px;top:474px" width="60" height="60"><defs><clipPath id="c4"><circle cx="30" cy="30" r="29.5"/></clipPath></defs><g clip-path="url(#c4)">
<rect width="60" height="60" fill="#8aa0a8"/>
<rect y="0" width="60" height="14" fill="#c8d4d8"/>
<path d="M0 14l26-2 0 34H0z" fill="#3a3a28"/>
<path d="M0 22l22-4v8L0 30z" fill="#4a5a40"/>
<path d="M44 22h16v30H44z" fill="#2a3a34"/>
<ellipse cx="16" cy="31" rx="7" ry="10" fill="#143a8a"/>
<path d="M5 40l10-8 12 4 0 24H8z" fill="#b8bcd4"/>
<ellipse cx="36" cy="23" rx="13" ry="15" fill="#ecdcd8"/>
<ellipse cx="33" cy="48" rx="14" ry="14" fill="#e8dcd6"/>
<path d="M23 8l4-6 5 6zM40 6l6-3 2 8z" fill="#e2c8c4"/>
<path d="M28 23h3M37 23h3" stroke="#444" stroke-width="1.4"/>
<path d="M25 38l14 4 11-4-3 6-10 4-10-4z" fill="#c82020"/>
<path d="M44 40l7 1-3 3z" fill="#f0b020"/>
</g></svg>
<div class="a" style="left:1373.5px;top:549.5px;width:110px;height:21.5px;background:#121212"></div><svg style="left:1378px;top:552.5px" width="15" height="16"><rect x="5" y="1" width="5" height="9" rx="2.5" fill="#fff"/><path d="M2.5 7c0 3 2 5 5 5s5-2 5-5M7.5 12v3" fill="none" stroke="#fff" stroke-width="1.3"/><path d="M1.5 14.5L13.5 2" stroke="#e0303a" stroke-width="1.6"/></svg><div class="t" style="left:1393px;top:555.0px;font-size:11.5px;color:#fff">10-护本-10-胡菲</div>
<div class="a" style="left:1372px;top:582px;width:220px;height:124px;border:1.5px solid #505155;border-radius:4px;background:#232427"></div>
<svg style="left:1451px;top:606px" width="60" height="60"><defs><clipPath id="c5"><circle cx="30" cy="30" r="29.5"/></clipPath></defs><g clip-path="url(#c5)">
<rect width="60" height="60" fill="#7a7a7a"/>
<path d="M0 30l12-4 8 34H0z" fill="#1e1e1e"/>
<path d="M30 20l18-4 12 14v30H28z" fill="#1a1a1a"/>
<path d="M14 6l14-4 6 14-6 18-10 4-4-12z" fill="#8c8c8c"/>
<ellipse cx="26" cy="22" rx="6" ry="7" fill="#b0b0b0"/>
<path d="M14 38q10-12 24 0l-2 14-10 4-10-6z" fill="#8a8a8a"/>
<ellipse cx="27" cy="46" rx="7" ry="7" fill="#a8a8a8"/>
<ellipse cx="39" cy="28" rx="9" ry="10" fill="#151515"/>
<ellipse cx="42" cy="38" rx="5" ry="6" fill="#a0a0a0"/>
<path d="M44 46l4 10 8-4-4-6z" fill="#b8b8b8"/>
<path d="M36 6h16" stroke="#a8a8a8" stroke-width="2"/>
</g></svg>
<div class="a" style="left:1373.5px;top:681px;width:118px;height:21.5px;background:#121212"></div><svg style="left:1378px;top:684px" width="15" height="16"><rect x="5" y="1" width="5" height="9" rx="2.5" fill="#fff"/><path d="M2.5 7c0 3 2 5 5 5s5-2 5-5M7.5 12v3" fill="none" stroke="#fff" stroke-width="1.3"/><path d="M1.5 14.5L13.5 2" stroke="#e0303a" stroke-width="1.6"/></svg><div class="t" style="left:1393px;top:686.5px;font-size:11.5px;color:#fff">10-健管-15-赵心如</div>
<div class="a" style="left:1372px;top:714px;width:220px;height:124px;border:1.5px solid #505155;border-radius:4px;background:#232427"></div>
<svg style="left:1451px;top:738px" width="60" height="60"><defs><clipPath id="c6"><circle cx="30" cy="30" r="29.5"/></clipPath></defs><g clip-path="url(#c6)">
<rect width="60" height="60" fill="#f2f2f2"/>
<path d="M18 0h36l6 20v40H44l-6-20-8-10-10 22-6 8-4-30z" fill="#141414"/>
<ellipse cx="42" cy="34" rx="9" ry="14" fill="#e8e8e8"/>
<path d="M16 60l4-16q10-4 18 4l0 12z" fill="#e0e0e0"/>
<path d="M38 46l10 0 4 14H38z" fill="#dcdcdc"/>
<path d="M10 22l2 4M8 28l3 1" stroke="#444" stroke-width="1.4"/>
<path d="M36 34h6M40 42h6" stroke="#555" stroke-width="1.2"/>
<path d="M34 6h8v4h-8z" fill="#f0f0f0"/>
<path d="M52 40h6v14h-6z" fill="#f0f0f0"/>
</g></svg>
<div class="a" style="left:1373.5px;top:813px;width:121px;height:21.5px;background:#121212"></div><svg style="left:1378px;top:816px" width="15" height="16"><rect x="5" y="1" width="5" height="9" rx="2.5" fill="#fff"/><path d="M2.5 7c0 3 2 5 5 5s5-2 5-5M7.5 12v3" fill="none" stroke="#fff" stroke-width="1.3"/><path d="M1.5 14.5L13.5 2" stroke="#e0303a" stroke-width="1.6"/></svg><div class="t" style="left:1393px;top:818.5px;font-size:11.5px;color:#fff">10 护理学53 刘晓荣</div>
<div class="a" style="left:1330px;top:66px;width:244px;height:35.5px;background:#2e3034"></div>
<div class="t" style="left:1341px;top:79px;font-size:12.6px;letter-spacing:-0.35px;color:#fff">正在讲话: mv2;</div>
<svg style="left:1517px;top:72px" width="46" height="25" opacity=".55"><path d="M1 13L12 1l10 11-10 12z" fill="#4a4c50"/><path d="M16 13L27 3l18 11-12 10z" fill="#4a4c50"/></svg>
<div class="a" style="left:1371px;top:835px;width:101px;height:27px;background:linear-gradient(#f0f0f0 0,#b8b8b8 7%,#8a8a8a 25%,#5a5a5a 50%,#333 56%,#2c2c2c 100%)"></div>
<svg style="left:1374px;top:839px" width="10" height="20"><g fill="#222"><circle cx="1.5" cy="1.5" r="1"/><circle cx="4.5" cy="1.5" r="1"/><circle cx="7.5" cy="1.5" r="1"/><circle cx="1.5" cy="5.5" r="1"/><circle cx="4.5" cy="5.5" r="1"/><circle cx="7.5" cy="5.5" r="1"/></g><g fill="#111"><circle cx="1.5" cy="9.5" r="1"/><circle cx="4.5" cy="9.5" r="1"/><circle cx="7.5" cy="9.5" r="1"/><circle cx="1.5" cy="13.5" r="1"/><circle cx="4.5" cy="13.5" r="1"/><circle cx="7.5" cy="13.5" r="1"/></g><g fill="#555"><circle cx="1.5" cy="17.5" r="1"/><circle cx="4.5" cy="17.5" r="1"/><circle cx="7.5" cy="17.5" r="1"/></g></svg>
<div class="t" style="left:1391px;top:842.5px;font-size:12px;color:#fff;font-family:'Liberation Mono',monospace;font-weight:bold">CH</div>
<svg style="left:1412px;top:840px" width="16" height="14"><path d="M2 5c2-3 5-1 8-2s3-2 4-2" fill="none" stroke="#aaa" stroke-width=".8"/><rect x=".5" y="5.5" width="14" height="8" rx="1" fill="#555" stroke="#c8c8c8"/><path d="M2.5 8h10M2.5 11h10" stroke="#ddd" stroke-dasharray="1.2 1"/></svg>
<div class="a" style="left:1435px;top:838.5px;width:15px;height:15px;border-radius:50%;background:radial-gradient(circle at 50% 35%,#3a3af0,#1010b8 70%);border:1px solid #bbb"></div>
<div class="t" style="left:1439px;top:840.5px;font-size:11px;font-weight:bold;color:#fff">?</div>
<div class="a" style="left:1461px;top:841.5px;width:6px;height:2.5px;background:#fff"></div>
<svg style="left:1461px;top:850px" width="7" height="5"><path d="M0 0h7L3.5 4z" fill="#fff"/></svg>

</body></html>
